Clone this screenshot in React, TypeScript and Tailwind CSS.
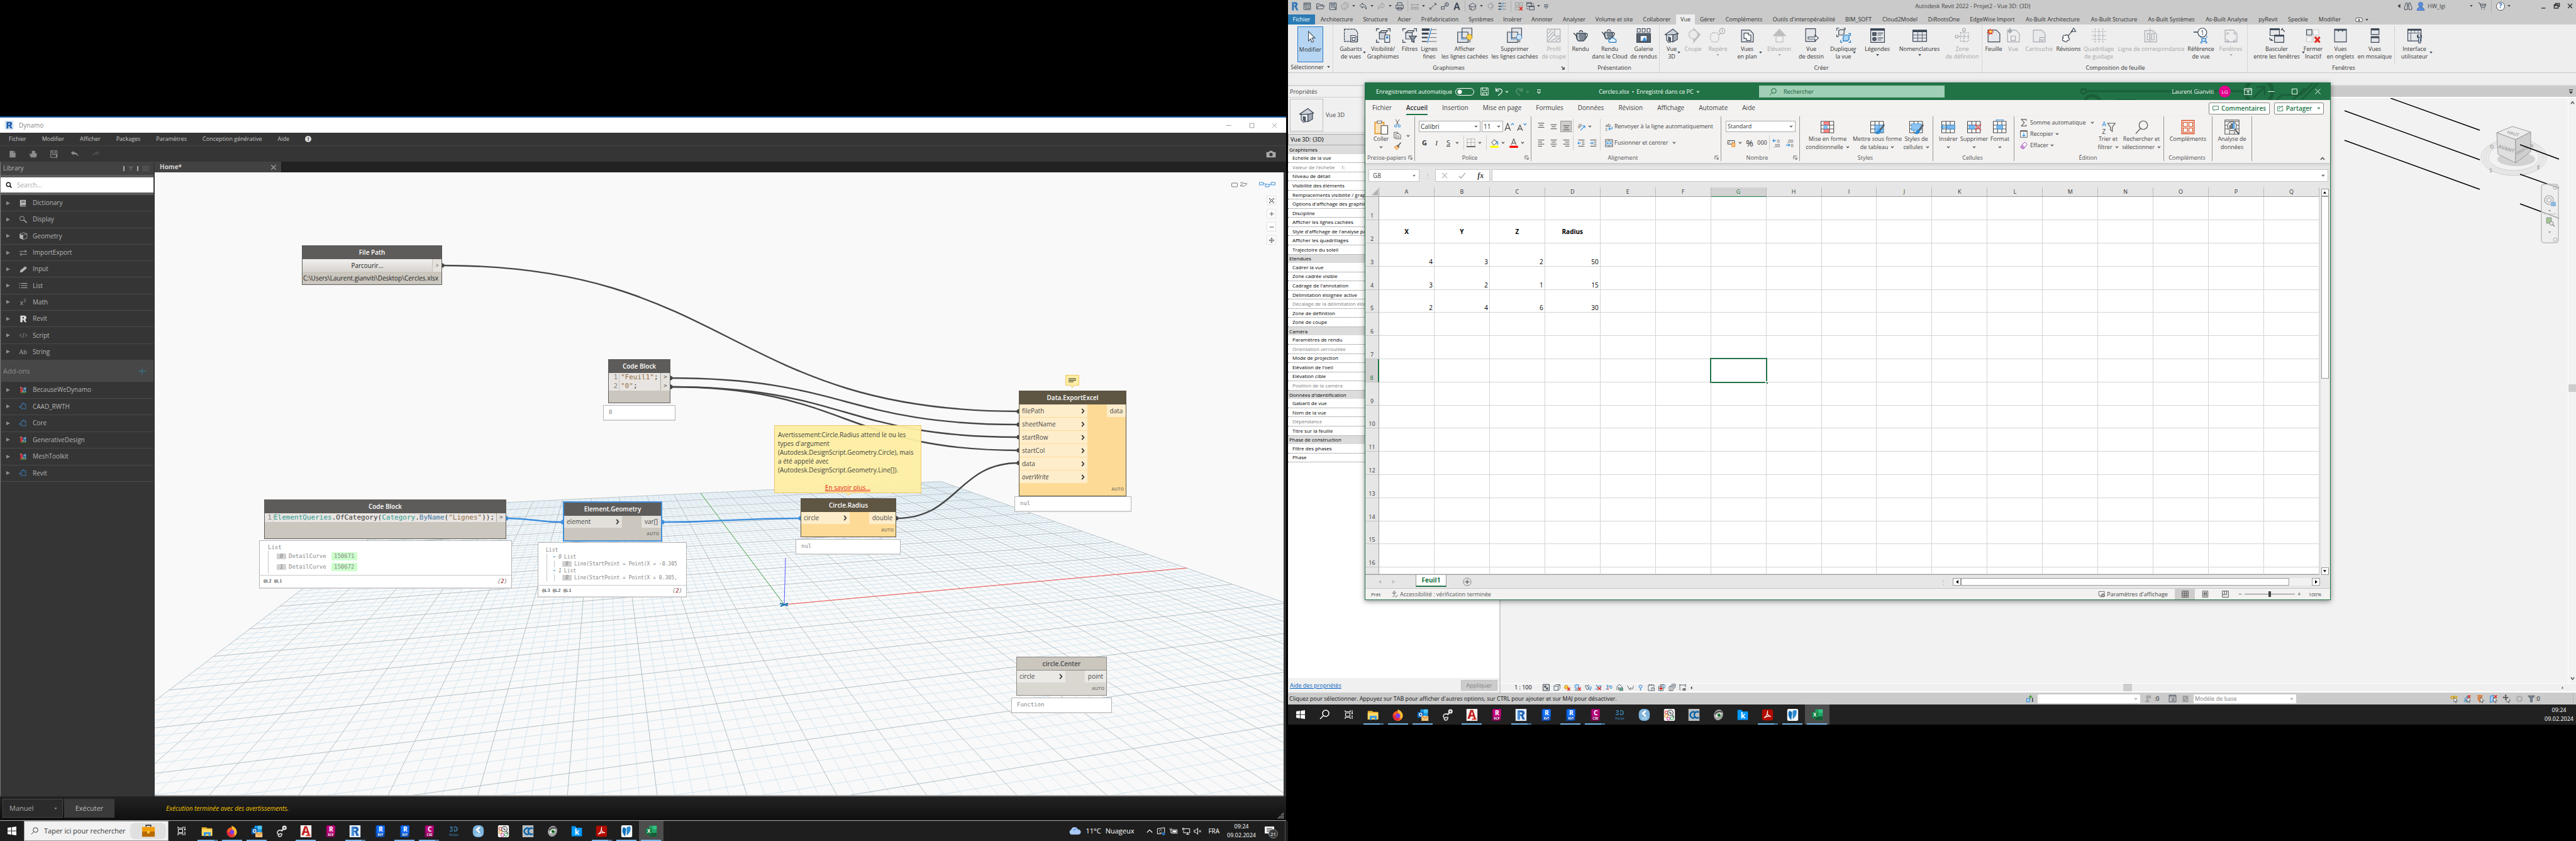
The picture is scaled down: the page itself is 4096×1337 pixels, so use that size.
import React from "react";
import type { ReactNode } from "react";

const INK = "#3b4654";
const BLUE = "#1a74c4";

type SvgProps = { c?: string; vb?: string; children: ReactNode };

function Svg({ c = "h-6 w-6", vb = "0 0 32 32", children }: SvgProps) {
  return (
    <svg aria-hidden="true" viewBox={vb} className={`shrink-0 ${c}`} fill="none">
      {children}
    </svg>
  );
}

function Chevron({ c = "text-[#444]" }: { c?: string }) {
  return (
    <svg aria-hidden="true" viewBox="0 0 8 6" className={`h-[4px] w-[6px] shrink-0 ${c}`} fill="none" stroke="currentColor" strokeWidth="1.6">
      <path d="M1 1l3 3.4L7 1" />
    </svg>
  );
}

function Caret({ c = "text-[#3b4654]" }: { c?: string }) {
  return (
    <svg aria-hidden="true" viewBox="0 0 6 4" className={`h-[3px] w-[5px] shrink-0 ${c}`} fill="currentColor">
      <path d="M0 0h6L3 4z" />
    </svg>
  );
}

/* ------------------------------------------------------------------ */
/* Shared taskbar                                                      */
/* ------------------------------------------------------------------ */

const badge = (fill: string, dark: string, letter: string, tag: string) => (
  <g>
    <path d="M3 2l3-2h15v22l-3 2H3z" fill={dark} />
    <path d="M5 1h16v15H5z" fill={fill} />
    <text x="13" y="13" fontSize="13" fontWeight="700" fill="#fff" textAnchor="middle" fontFamily="Open Sans">{letter}</text>
    <text x="12.5" y="22" fontSize="6" fontWeight="700" fill="#fff" textAnchor="middle" fontFamily="Open Sans">{tag}</text>
  </g>
);

type TaskApp = { name: string; open?: boolean; multi?: boolean; active?: boolean; icon: ReactNode };

const APPS: TaskApp[] = [
  {
    name: "Explorateur", open: true, multi: true,
    icon: (<g><path d="M1 4h9l2 2h10v15H1z" fill="#f0b429" /><path d="M1 8h21v13H1z" fill="#ffd966" /><path d="M5 14h14v8h-4v-4H9v4H5z" fill="#3d9be0" /></g>),
  },
  {
    name: "Firefox", open: true,
    icon: (<g><circle cx="12" cy="14" r="10" fill="#ff5a1f" /><path d="M12 1c7 3 11 8 10 14-1 6-7 9-12 8 6-2 8-6 6-10-1-4-5-6-4-12z" fill="#ffbd2e" /><path d="M2 10c-1 8 4 13 9 13 4 0 7-2 8-5-4 2-9 1-10-4-4 0-5-2-7-4z" fill="#e8253b" /><circle cx="12.5" cy="13.5" r="4.5" fill="#7a3df0" /></g>),
  },
  {
    name: "Outlook", open: true,
    icon: (<g><path d="M7 1h15v14H7z" fill="#1a9be8" /><path d="M14 1h8v7h-8z" fill="#50c8f5" /><path d="M1 6h12v12H1z" fill="#0b5cad" /><text x="7" y="15.5" fontSize="10" fontWeight="700" fill="#fff" textAnchor="middle" fontFamily="Open Sans">O</text><path d="M9 14h14v10H9z" fill="#f7c27a" /><path d="M9 14l7 5 7-5" stroke="#a35c00" /></g>),
  },
  {
    name: "Outil stylet",
    icon: (<g><path d="M12 12l6-7" stroke="#d8d8d8" strokeWidth="3" /><circle cx="18" cy="5" r="4.5" fill="#e9e9e9" /><circle cx="18" cy="5" r="2" fill="#6b6b6b" /><path d="M13 11c-6-3-10 1-9 5 1 3 6 2 7 0M6 18c-2 5 4 6 6 3l1-5" stroke="#e4e4e4" strokeWidth="2" /></g>),
  },
  {
    name: "AutoCAD", open: true,
    icon: (<g><path d="M1 0h22v24H1z" fill="#f6f2f0" /><path d="M3 20L9 2h5l6 18h-4l-1.500-5H9l-1.500 5zM10 12h4l-2-7z" fill="#c4201f" /><path d="M12 19h9v3h-9z" fill="#e2453b" /></g>),
  },
  { name: "ReCap", icon: badge("#c0077b", "#850055", "R", "RCP") },
  {
    name: "Revit 2022", open: true, multi: true,
    icon: (<g><path d="M1 0h22v24H1z" fill="#e3edf8" /><path d="M5 3h9c6 0 7 8 2 10l4 8h-5l-3-7h-2v7H5zM10 7v4c5 1 6-4 2-4z" fill="#1f63b5" /><path d="M5 3l5 4v14H5z" fill="#4a90d9" /></g>),
  },
  { name: "Revit RVT", icon: badge("#146ef5", "#0b4bb0", "R", "RVT") },
  { name: "Revit RVT 2", open: true, icon: badge("#146ef5", "#0b4bb0", "R", "RVT") },
  { name: "Civil 3D", open: true, multi: true, icon: badge("#b5087a", "#7e0052", "C", "C3D") },
  {
    name: "3D PurJet",
    icon: (<g><text x="12" y="12" fontSize="13" fontWeight="700" fill="#3f7fae" textAnchor="middle" fontFamily="Open Sans">3D</text><path d="M12 2v14M7 9l10-4" stroke="#16222d" strokeWidth="1.5" /><text x="12" y="21" fontSize="6" fontWeight="700" fill="#356b95" textAnchor="middle" fontFamily="Open Sans">PurJet</text></g>),
  },
  {
    name: "3DR",
    icon: (<g><rect x="1" y="0" width="22" height="24" rx="9" fill="#7eb4dc" /><path d="M15 4l-6 5 6 6" stroke="#fff" strokeWidth="3.5" /><text x="12" y="21.5" fontSize="6" fontWeight="700" fill="#b8dcf5" textAnchor="middle" fontFamily="Open Sans">3DR</text></g>),
  },
  {
    name: "Recherche BIM",
    icon: (<g><rect x="1" y="0" width="22" height="24" rx="3" fill="#fff" /><g strokeWidth="1.6"><circle cx="6" cy="7" r="3" stroke="#e05252" /><circle cx="6" cy="14" r="3" stroke="#e9a53a" /><circle cx="10" cy="19.5" r="3" stroke="#d65bb0" /><circle cx="17" cy="19" r="3" stroke="#59b877" /></g><circle cx="14" cy="8" r="5.5" fill="#e9eef2" stroke="#555" strokeWidth="1.6" /><path d="M12 6l4 4M18 12l3 5" stroke="#444" strokeWidth="1.8" /></g>),
  },
  {
    name: "CloudCompare",
    icon: (<g><path d="M1 0h22v24H1z" fill="#b9bec2" /><path d="M14 7a6 6 0 1 0 0 10M22 7a6 6 0 1 0 0 10" stroke="#0a64a8" strokeWidth="3" /></g>),
  },
  {
    name: "Visionneuse",
    icon: (<g><ellipse cx="12" cy="12" rx="9" ry="11" fill="#a4a4a4" transform="rotate(20 12 12)" /><path d="M6 15c3-7 8-8 12-6-1 6-7 9-12 6z" fill="#fff" /><circle cx="13" cy="12.5" r="3.5" fill="#3aa04a" /><circle cx="13" cy="12.5" r="1.5" fill="#111" /><path d="M5 10c4-5 9-6 14-4" stroke="#333" strokeWidth="2" /></g>),
  },
  {
    name: "kDrive",
    icon: (<g><path d="M1 2h8l2 3h11v17H1z" fill="#0098ff" /><text x="12" y="19" fontSize="15" fontWeight="700" fill="#fff" textAnchor="middle" fontFamily="Open Sans">k</text></g>),
  },
  {
    name: "Acrobat", open: true, multi: true,
    icon: (<g><rect x="1" y="1" width="22" height="22" rx="4" fill="#b30b00" /><path d="M5 18c4-2 8-8 7-13-2 5 2 10 7 10-5-1-10 0-14 3z" stroke="#fff" strokeWidth="1.6" /></g>),
  },
  {
    name: "Solibri", open: true,
    icon: (<g><rect x="1" y="0" width="22" height="24" rx="3" fill="#f5f8fb" /><path d="M5 4c4 0 5 2 6 4L9 22C3 17 2 9 5 4z" fill="#0f6fb8" /><path d="M12 4c4-2 8-2 8 1 0 7-3 12-8 15z" fill="#2b8bd0" /></g>),
  },
  {
    name: "Excel", open: true, active: true,
    icon: (<g><path d="M8 1h15v22H8z" fill="#21a366" /><path d="M15 1h8v7h-8z" fill="#33c481" /><path d="M15 15h8v8h-8zM8 15h7v8H8z" fill="#185c37" /><path d="M1 6h12v12H1z" fill="#107c41" /><text x="7" y="15.5" fontSize="10" fontWeight="700" fill="#fff" textAnchor="middle" fontFamily="Open Sans">X</text></g>),
  },
];

function TaskApps() {
  return (
    <div className="flex w-[745px] shrink-0">
      {APPS.map((a) => (
        <button key={a.name} type="button" aria-label={a.name} className={`flex h-8 flex-1 flex-col items-center ${a.active ? "bg-[#4d4d4d]" : ""}`}>
          <span className="flex flex-1 items-center pt-[2px]">
            <Svg c="h-[19px] w-[19px]" vb="0 0 24 24">{a.icon}</Svg>
          </span>
          <span className="flex h-[2px] w-8">
            {a.open && <span className="flex-1 bg-[#76b9ed]" />}
            {a.multi && <span className="w-[6px] bg-[#4f7ea3]" />}
          </span>
        </button>
      ))}
    </div>
  );
}

function WindowsLogo() {
  return (
    <Svg c="h-4 w-4" vb="0 0 16 16">
      <path d="M1 3l6-1v5.500H1zM8 2l7-1v6.500H8zM1 8.500h6V14l-6-1zM8 8.500h7V15l-7-1z" fill="#fff" />
    </Svg>
  );
}

function TaskView() {
  return (
    <Svg c="h-4 w-4" vb="0 0 16 16">
      <path d="M2 1v2.500h8V1M2.500 5.500h7v5h-7zM2 15v-2.500h8V15M13 1v6M13 9v6" stroke="#fff" strokeWidth="1.1" />
      <path d="M12 5h2v2h-2z" fill="#fff" />
    </Svg>
  );
}

function Clock() {
  return (
    <div className="flex flex-col items-center text-[9px] leading-[14px] text-white">
      <span>09:24</span>
      <span>09.02.2024</span>
    </div>
  );
}

/* ------------------------------------------------------------------ */
/* Dynamo                                                              */
/* ------------------------------------------------------------------ */

const puzzle = (
  <path d="M7 6h4V3h3v3h5v4l-2 1 2 2v6h-5l-1-2-2 2H7v-4H2v-3h5z" stroke="#3f84c4" strokeWidth="1.5" />
);
const meshIcon = (
  <g>
    <path d="M4 3l7 3v9l-7 6z" fill="#c8343c" />
    <path d="M11 6l9-2v14l-9-3z" fill="#3c6f93" />
    <path d="M4 21l7-6 9 3v2z" fill="#4c7c45" />
    <path d="M13 8l5-1v4z" fill="#5db6e0" />
    <g fill="#fff"><circle cx="5" cy="5" r="1.2" /><circle cx="11" cy="15" r="1.2" /><circle cx="18" cy="16" r="1.2" /><circle cx="17" cy="7" r="1.2" /></g>
  </g>
);

const LIBRARY: { name: string; icon: ReactNode }[] = [
  { name: "Dictionary", icon: (<g><path d="M5 3h14v14H6v2h13v2H5c-2 0-2-2-2-3V5c0-1 1-2 2-2z" fill="#b8b8b8" /><path d="M7 7h9M7 10h9" stroke="#353535" strokeWidth="1.4" /></g>) },
  { name: "Display", icon: (<g stroke="#aaa" strokeWidth="1.6"><circle cx="8.5" cy="9" r="6" /><path d="M13 13l9 8" strokeWidth="2.5" /></g>) },
  { name: "Geometry", icon: (<g><path d="M2 7l9 3v12l-9-4z" fill="#b5b5b5" /><path d="M2 7l10-4 10 3-11 4v12l11-4V6" stroke="#b5b5b5" strokeWidth="1.3" /></g>) },
  { name: "ImportExport", icon: (<path d="M2 8h19l-5-4M21 8l-5 3M22 16H3l5-4M3 16l5 4" stroke="#aaa" strokeWidth="1.5" />) },
  { name: "Input", icon: (<path d="M3 21l1-6L16 5c3-1 6 2 5 5L9 20z" fill="#b5b5b5" />) },
  { name: "List", icon: (<path d="M1 6h2.500M1 12h2.500M1 18h2.500M6 6h17M6 12h17M6 18h17" stroke="#b5b5b5" strokeWidth="2" />) },
  { name: "Math", icon: (<g fill="#aaa"><text x="3" y="20" fontSize="17" fontFamily="Open Sans">x</text><text x="13" y="12" fontSize="11" fontFamily="Open Sans">2</text></g>) },
  { name: "Revit", icon: (<path d="M4 3h11c7 0 7 9 2 11l4 7h-5l-4-7h-2v7H4zM10 7v4c5 1 5-4 2-4z" fill="#dcdcdc" />) },
  { name: "Script", icon: (<path d="M7 8l-5 4 5 4M17 8l5 4-5 4M14 6l-4 13" stroke="#999" strokeWidth="1.4" />) },
  { name: "String", icon: (<text x="0" y="19" fontSize="18" fill="#aaa" fontFamily="Liberation Serif">Ab</text>) },
];
const ADDONS: { name: string; icon: ReactNode }[] = [
  { name: "BecauseWeDynamo", icon: meshIcon },
  { name: "CAAD_RWTH", icon: puzzle },
  { name: "Core", icon: puzzle },
  { name: "GenerativeDesign", icon: meshIcon },
  { name: "MeshToolkit", icon: meshIcon },
  { name: "Revit", icon: puzzle },
];

function LibRows({ rows, h }: { rows: { name: string; icon: ReactNode }[]; h: string }) {
  return (
    <ul className={`flex flex-col ${h}`}>
      {rows.map((r) => (
        <li key={r.name} className="flex flex-1 border-b border-[#4a4a4a]">
          <button type="button" className="flex flex-1 items-center pl-2 text-[10px] text-[#b4b4b4]">
            <svg aria-hidden="true" viewBox="0 0 6 6" className="h-[6px] w-[6px]"><path d="M0 0l6 3-6 3z" fill="#8f8f8f" /></svg>
            <span className="ml-[14px] w-[22px]"><Svg c="h-[14px] w-[14px]" vb="0 0 24 24">{r.icon}</Svg></span>
            {r.name}
          </button>
        </li>
      ))}
    </ul>
  );
}

/* Ground plane: X and Y run from -1 to 1, seen in perspective. */
const project = (X: number, Y: number): [number, number] => {
  const w = 1 + 0.1726 * X + 0.8494 * Y;
  return [(923.4 * X + 604.5 * Y + 1000.8) / w, (50.6 * X + 255.9 * Y + 687.3) / w];
};

function GroundGrid() {
  const minor: string[] = [];
  const major: string[] = [];
  for (let i = -50; i <= 50; i++) {
    const v = i / 50;
    const target = i % 5 === 0 ? major : minor;
    const y0 = Math.max(-1, (-0.88 - 0.1726 * v) / 0.8494);
    const a = project(v, y0);
    const b = project(v, 1);
    target.push(`M${a[0].toFixed(1)} ${a[1].toFixed(1)}L${b[0].toFixed(1)} ${b[1].toFixed(1)}`);
    if (1 + 0.1726 + 0.8494 * v > 0.14) {
      const x0 = Math.max(-1, (-0.88 - 0.8494 * v) / 0.1726);
      const c = project(x0, v);
      const d = project(1, v);
      target.push(`M${c[0].toFixed(1)} ${c[1].toFixed(1)}L${d[0].toFixed(1)} ${d[1].toFixed(1)}`);
    }
  }
  return (
    <g>
      <path d={minor.join("")} stroke="#c9dfec" strokeWidth="0.8" />
      <path d={major.join("")} stroke="#a9bac3" strokeWidth="0.9" />
      <path d="M1001 687L1641 629" stroke="#ff5a5a" />
      <path d="M1001 687L868 510" stroke="#4fae4f" />
      <path d="M1001 687L1003 613" stroke="#5a5aff" />
      <path d="M994 685l13 4M995 690l12-5" stroke="#1f77b4" strokeWidth="2" />
    </g>
  );
}

const wire = (x0: number, y0: number, x1: number, y1: number) => {
  const m = (x0 + x1) / 2;
  return `M${x0} ${y0}C${m} ${y0} ${m} ${y1} ${x1} ${y1}`;
};
const DARK_WIRES: [number, number, number, number][] = [
  [457, 148, 1374, 380],
  [820, 327, 1374, 401],
  [820, 341, 1374, 421],
  [820, 341, 1374, 442],
  [1179, 550, 1374, 462],
];
const BLUE_WIRES: [number, number, number, number][] = [
  [559, 550, 649, 556],
  [807, 556, 1027, 550],
];

function Wires() {
  return (
    <g strokeWidth="2.4">
      {DARK_WIRES.map((w) => (
        <g key={w.join()}>
          <path d={wire(...w)} stroke="#464646" />
          <circle cx={w[0]} cy={w[1]} r="3.5" fill="#464646" />
          <circle cx={w[2]} cy={w[3]} r="3.5" fill="#464646" />
        </g>
      ))}
      {BLUE_WIRES.map((w) => (
        <g key={w.join()}>
          <path d={wire(...w)} stroke="#3f8fdc" />
          <circle cx={w[0]} cy={w[1]} r="3.5" fill="#3f8fdc" />
          <circle cx={w[2]} cy={w[3]} r="3.5" fill="#3f8fdc" />
        </g>
      ))}
    </g>
  );
}

function PortChevron() {
  return (
    <svg aria-hidden="true" viewBox="0 0 6 10" className="h-[9px] w-[6px]" fill="none" stroke="#3c3c3c" strokeWidth="2">
      <path d="M1 1l3.500 4L1 9" />
    </svg>
  );
}

type NodeProps = {
  place: string;
  title: string;
  inputs: string[];
  output: string;
  inW: string;
  outW: string;
  rowH?: string;
  tone?: "plain" | "warn" | "selected" | "off";
};

function GraphNode({ place, title, inputs, output, inW, outW, rowH = "h-[19px]", tone = "plain" }: NodeProps) {
  const frame = {
    plain: "border border-[#5e5c5a] bg-[#cbc6be]",
    warn: "border border-[#5e5543] bg-[#fddb96]",
    selected: "border-2 border-[#3f8fdc] bg-[#cbc6be]",
    off: "border border-[#8c8a86] bg-[#dad7d1]",
  }[tone];
  const head = {
    plain: "bg-[#5e5c5a] text-white",
    warn: "bg-[#5e5543] text-white",
    selected: "bg-[#5e5c5a] text-white",
    off: "border-b border-[#8c8a86] bg-[#cbc6be] text-[#4b4b4b]",
  }[tone];
  const port = { plain: "bg-[#e3e0db]", warn: "bg-[#feedcb]", selected: "bg-[#e3e0db]", off: "bg-[#ebe9e6]" }[tone];
  return (
    <article className={`absolute flex flex-col ${frame} ${place}`}>
      <h3 className={`flex h-[21px] items-center justify-center text-[10px] font-semibold ${head}`}>{title}</h3>
      <div className="flex items-start justify-between text-[10px] text-[#4a4a4a]">
        <ul className={`flex flex-col gap-px ${inW}`}>
          {inputs.map((n) => (
            <li key={n} className={`flex items-center justify-between pl-1 pr-1 ${rowH} ${port} ${n === "overWrite" ? "italic" : ""}`}>
              {n}
              <PortChevron />
            </li>
          ))}
        </ul>
        <span className={`flex items-center justify-center ${rowH} ${outW} ${port}`}>{output}</span>
      </div>
      <span className="flex h-5 items-center justify-end pr-[3px] text-[7px] font-bold text-[#4a4a4a]/60">AUTO</span>
    </article>
  );
}

function Preview({ place, size = "text-[9px]", children }: { place: string; size?: string; children: ReactNode }) {
  return (
    <div className={`absolute border border-b-2 border-[#b4b4b4] border-b-[#cfcfcf] bg-white font-['DejaVu_Sans_Mono',monospace] text-[#888] ${size} ${place}`}>
      {children}
    </div>
  );
}

function CodePort() {
  return <span className="flex h-full w-[15px] shrink-0 items-center justify-center border-l border-[#aaa7a2] bg-[#e5e1dd] text-[9px] text-[#555]">&gt;</span>;
}

function FilePathNode() {
  return (
    <article className="absolute left-[234px] top-[116px] flex w-[223px] flex-col border border-[#5e5c5a] bg-[#cbc6be]">
      <h3 className="flex h-[21px] items-center justify-center bg-[#5e5c5a] text-[10px] font-semibold text-white">File Path</h3>
      <div className="flex h-5">
        <button type="button" className="flex-1 bg-linear-to-b from-[#f1f0ee] to-[#d8d4cf] text-[10px] text-[#222]">Parcourir...</button>
        <span className="flex w-[15px] items-center justify-center border-l border-[#c4bfb8] bg-[#e5e1dd] text-[9px] text-[#555]">&gt;</span>
      </div>
      <p className="flex h-[20px] items-center pl-px text-[10px] whitespace-nowrap text-[#222]">C:\Users\Laurent.gianviti\Desktop\Cercles.xlsx</p>
    </article>
  );
}

function FeuilNode() {
  return (
    <article className="absolute left-[721px] top-[297px] flex w-[99px] flex-col border border-[#5e5c5a] bg-[#cbc6be] pb-[19px]">
      <h3 className="flex h-[21px] items-center justify-center bg-[#5e5c5a] text-[10px] font-semibold text-white">Code Block</h3>
      {['"Feuil1"', '"0"'].map((s, i) => (
        <div key={s} className="flex h-[14px] items-center bg-[#e8e4e1] font-['DejaVu_Sans_Mono',monospace] text-[11px] text-[#333]">
          <span className="w-[17px] border-r border-dotted border-[#aaa] pr-[2px] text-right text-[#888]">{i + 1}</span>
          <span className="flex-1 pl-[2px]"><span className="text-[#94704a]">{s}</span>;</span>
          <CodePort />
        </div>
      ))}
    </article>
  );
}

function QueryNode() {
  return (
    <article className="absolute left-[174px] top-[520px] flex w-[385px] flex-col border border-[#5e5c5a] bg-[#cbc6be] pb-[26px]">
      <h3 className="flex h-[21px] items-center justify-center bg-[#5e5c5a] text-[10px] font-semibold text-white">Code Block</h3>
      <div className="flex h-[14px] items-center bg-[#e8e4e1] font-['DejaVu_Sans_Mono',monospace] text-[11px] whitespace-nowrap text-[#333]">
        <span className="w-[14px] shrink-0 border-r border-dotted border-[#aaa] pr-[2px] text-right text-[#888]">1</span>
        <code className="flex-1 font-['DejaVu_Sans_Mono',monospace]">
          <span className="text-[#2f9c91]">ElementQueries</span>.OfCategory(<span className="text-[#2f9c91]">Category</span>.<span className="text-[#4676a0]">ByName</span>(<span className="text-[#94704a]">"Lignes"</span>));
        </code>
        <CodePort />
      </div>
    </article>
  );
}

function IndexTag({ n }: { n: string }) {
  return <span className="flex h-[9px] w-[15px] items-center justify-center bg-[#d2d2d2] italic">{n}</span>;
}

function DynamoCanvas() {
  return (
    <div className="relative min-w-0 flex-1 overflow-hidden bg-[#f9f9f9]">
      <svg aria-hidden="true" className="absolute inset-0 h-full w-full" fill="none">
        <GroundGrid />
        <Wires />
      </svg>

      <FilePathNode />
      <FeuilNode />
      <Preview place="left-[713px] top-[370px] flex h-[25px] w-[115px] items-center pl-2">0</Preview>
      <QueryNode />
      <Preview place="left-[166px] top-[585px] flex h-[77px] w-[402px] flex-col">
        <div className="flex flex-1 flex-col pl-[13px] pt-[5px]">
          <span className="leading-[11px]">List</span>
          <ul className="flex w-[160px] flex-col gap-[4px] border-l border-[#c4c4c4] pt-[2px] pl-[13px] pb-1">
            {["150671", "150672"].map((id, i) => (
              <li key={id} className="flex h-[13px] items-center gap-1">
                <IndexTag n={String(i)} />
                <span className="w-[64px]">DetailCurve</span>
                <span className="flex h-[13px] items-center bg-[#ccffcc] px-1">{id}</span>
              </li>
            ))}
          </ul>
        </div>
        <div className="flex h-[20px] items-center justify-between border-t border-[#c9c9c9] px-[6px]">
          <span className="text-[7px] text-[#222]">@L2 @L1</span>
          <span className="text-[9px] italic">{"{"}<span className="text-[#9c1c1c]">2</span>{"}"}</span>
        </div>
      </Preview>

      <GraphNode place="left-[649px] top-[523px] w-[158px]" title="Element.Geometry" inputs={["element"]} output="var[]" inW="w-[92px]" outW="w-[31px]" tone="selected" />
      <Preview place="left-[609px] top-[588px] flex h-[88px] w-[237px] flex-col" size="text-[8px]">
        <div className="flex flex-1 flex-col overflow-hidden pt-[6px] pl-[12px]">
          <span className="leading-[11px]">List</span>
          <div className="ml-px border-l border-[#c4c4c4] pl-[9px]">
            {["Line(StartPoint = Point(X = -0.305", "Line(StartPoint = Point(X = 0.305,"].map((t, i) => (
              <div key={t}>
                <div className="flex h-[11px] items-center gap-1"><Caret c="text-[#8fbfe0]" /><span className="italic">{i}</span><span>List</span></div>
                <div className="ml-[2px] flex h-[11px] items-center gap-1 border-l border-[#c4c4c4] pl-[12px] whitespace-nowrap"><IndexTag n="0" />{t}</div>
              </div>
            ))}
          </div>
        </div>
        <div className="flex h-[18px] items-center justify-between border-t border-[#c9c9c9] px-[6px]">
          <span className="text-[7px] text-[#222]">@L3 @L2 @L1</span>
          <span className="text-[9px] italic">{"{"}<span className="text-[#9c1c1c]">2</span>{"}"}</span>
        </div>
      </Preview>

      <aside className="absolute left-[985px] top-[402px] flex h-[108px] w-[234px] flex-col border border-[#f0c46c] bg-[#fdeea2]/95 px-[5px] pt-[7px] text-[10px] leading-[14px] text-[#3f3f3f]">
        <p>Avertissement:Circle.Radius attend le ou les<br />types d'argument<br /><span className="whitespace-nowrap">(Autodesk.DesignScript.Geometry.Circle), mais</span><br />a été appelé avec<br />(Autodesk.DesignScript.Geometry.Line[]).</p>
        <a href="#aide" className="mt-[14px] text-center text-[#e81c1c] underline">En savoir plus...</a>
        <svg aria-hidden="true" viewBox="0 0 8 5" className="absolute left-[113px] top-[106px] h-[5px] w-[8px]"><path d="M0 0l4 4.500L8 0z" fill="#fdeea2" stroke="#f0c46c" /></svg>
      </aside>
      <GraphNode place="left-[1027px] top-[518px] w-[152px]" title="Circle.Radius" inputs={["circle"]} output="double" inW="w-[77px]" outW="w-[42px]" tone="warn" />
      <Preview place="left-[1019px] top-[583px] flex h-[25px] w-[167px] items-center pl-2">nul</Preview>

      <svg aria-label="Note" role="img" viewBox="0 0 22 22" className="absolute left-[1448px] top-[322px] h-[22px] w-[22px]">
        <path d="M.5.500h21v16H14l-3 4-3-4H.5z" fill="#fdeea2" stroke="#f0c46c" />
        <path d="M5 6h12M5 8.500h12M5 11h8" stroke="#222" />
      </svg>
      <GraphNode place="left-[1374px] top-[347px] w-[171px]" title="Data.ExportExcel" inputs={["filePath", "sheetName", "startRow", "startCol", "data", "overWrite"]} output="data" inW="w-[108px]" outW="w-[30px]" rowH="h-5" tone="warn" />
      <Preview place="left-[1367px] top-[515px] flex h-[25px] w-[186px] items-center pl-2">nul</Preview>

      <GraphNode place="left-[1370px] top-[770px] w-[144px]" title="circle.Center" inputs={["circle"]} output="point" inW="w-[77px]" outW="w-[34px]" tone="off" />
      <Preview place="left-[1362px] top-[835px] flex h-[25px] w-[160px] items-center pl-2">Function</Preview>

      <div className="absolute right-3 top-2 flex flex-col items-end gap-[6px]">
        <div className="mt-[6px] mb-[7px] flex gap-4">
          <button type="button" aria-label="Arrière-plan 3D"><Svg c="h-[10px] w-[28px]" vb="0 0 56 20"><rect x="3" y="6" width="18" height="12" rx="2" stroke="#777" strokeWidth="2" /><path d="M30 15l10-9 12 2-9 8zM30 6l8-3" stroke="#777" strokeWidth="2" /></Svg></button>
          <button type="button" aria-label="Vue du graphe"><Svg c="h-[10px] w-[28px]" vb="0 0 56 20"><path d="M3 4h12v8H3zM22 10h12v8H22zM40 4h13v8H40zM15 8h8M34 14l6-6" stroke="#3f8fdc" strokeWidth="2" /></Svg></button>
        </div>
        {[
          { l: "Ajuster", d: "M3 7V3h4M13 3h4v4M17 13v4h-4M7 17H3v-4M7 7h6v6H7z" },
          { l: "Zoom avant", d: "M10 3v14M3 10h14" },
          { l: "Zoom arrière", d: "M3 10h14" },
          { l: "Panoramique", d: "M10 2v16M2 10h16M7 5l3-3 3 3M7 15l3 3 3-3M5 7l-3 3 3 3M15 7l3 3-3 3" },
        ].map((b) => (
          <button key={b.l} type="button" aria-label={b.l} className="flex h-[15px] w-[15px] items-center justify-center border border-[#e2e2e2] bg-white">
            <Svg c="h-[10px] w-[10px]" vb="0 0 20 20"><path d={b.d} stroke="#555" strokeWidth="2" /></Svg>
          </button>
        ))}
      </div>
    </div>
  );
}

function DynamoWindow() {
  return (
    <section aria-label="Dynamo" className="mr-[3px] flex min-h-0 flex-1 flex-col border-t-2 border-[#1d5fa3] bg-[#353535]">
      <header className="flex h-6 items-center bg-white pl-[7px] text-[#888]">
        <Svg c="h-[14px] w-[15px]" vb="0 0 24 24"><path d="M0 0h24v24H0z" fill="#d4e2f1" /><path d="M5 3h10c6 0 7 8 2 10l4 8h-5l-4-7h-2v7H5zM10 7v4c5 1 6-4 2-4z" fill="#1f5faf" /></Svg>
        <h1 className="ml-2 flex-1 text-[10px]">Dynamo</h1>
        <div className="flex w-[97px] justify-between pr-[13px] text-[#777]">
          {["M2 8h12", "M3 3h10v10H3z", "M3 3l10 10M13 3L3 13"].map((d) => (
            <button key={d} type="button" aria-label="Fenêtre"><Svg c="h-[11px] w-[11px]" vb="0 0 16 16"><path d={d} stroke="currentColor" /></Svg></button>
          ))}
        </div>
      </header>
      <nav className="flex h-[21px] items-center gap-[25px] border-b border-[#434343] pl-[14px] text-[9px] text-[#c8c8c8]">
        {["Fichier", "Modifier", "Afficher", "Packages", "Paramètres", "Conception générative", "Aide"].map((m) => (
          <button key={m} type="button">{m}</button>
        ))}
        <span className="flex h-[10px] w-[10px] items-center justify-center rounded-full bg-[#ddd] text-[8px] font-bold text-[#333]">!</span>
      </nav>
      <div className="flex h-[25px] items-center pl-[13px]">
        {[
          <path key="n" d="M4 3h10v5h6v13H4zM15 3l5 4h-5z" fill="#8c8c8c" />,
          <path key="o" d="M8 3h9v7h5l-2 11H5L1 11h7z" fill="#8c8c8c" />,
          <path key="s" d="M3 3h17v18H3zM7 3v6h9V3M6 13h12v8" stroke="#8c8c8c" strokeWidth="2" />,
          <path key="u" d="M1 9l8-6v4c7 0 12 5 13 12-3-5-7-7-13-7v3z" fill="#8c8c8c" />,
          <path key="r" d="M23 9l-8-6v4C8 7 3 12 2 19c3-5 7-7 13-7v3z" fill="#4c4c4c" />,
        ].map((i, n) => (
          <button key={n} type="button" aria-label="Outil" className="w-[33px]"><Svg c="h-[14px] w-[14px]" vb="0 0 24 24">{i}</Svg></button>
        ))}
        <span className="ml-auto mr-[16px]"><Svg c="h-3 w-4" vb="0 0 24 18"><path d="M1 4h6l2-3h6l2 3h6v13H1z" fill="#aaa" /><circle cx="12" cy="10" r="4" fill="#353535" /></Svg></span>
      </div>
      <div className="flex min-h-0 flex-1">
        <aside className="flex w-[244px] flex-col border-l border-[#777]">
          <div className="flex h-[21px] items-center bg-[#424242] pl-1 text-[10px] text-[#b4b4b4]">
            <h2 className="flex-1">Library</h2>
            <div className="flex w-[48px] items-center justify-between pr-[7px]">
              <span className="h-2 w-[2px] bg-[#aaa]" />
              <Svg c="h-2 w-2" vb="0 0 16 16"><path d="M0 1h16l-6 7v7H6V8z" fill="#636363" /></Svg>
              <span className="h-2 w-[2px] bg-[#aaa]" />
              <Svg c="h-2 w-[11px]" vb="0 0 16 12"><path d="M0 1h16M0 4.500h16M0 8h16M0 11.500h16" stroke="#636363" strokeWidth="1.5" /></Svg>
            </div>
          </div>
          <label className="flex h-8 items-center border-y-4 border-[#5c5c5c] bg-white pl-[8px]">
            <Svg c="h-[10px] w-[10px]" vb="0 0 16 16"><circle cx="7" cy="7" r="5" stroke="#111" strokeWidth="2.2" /><path d="M11 11l4 4" stroke="#111" strokeWidth="2.6" /></Svg>
            <input aria-label="Search" placeholder="Search..." className="ml-2 flex-1 text-[10px] outline-none placeholder:text-[#aaa]" />
          </label>
          <LibRows rows={LIBRARY} h="h-[263px] border-l border-[#464646]" />
          <div className="flex h-[34px] items-center justify-between bg-[#474747] pr-3 pl-1 text-[11px] text-[#8c8c8c]">
            <h2>Add-ons</h2>
            <button type="button" aria-label="Ajouter"><Svg c="h-3 w-3" vb="0 0 12 12"><path d="M6 0v12M0 6h12" stroke="#3d7186" strokeWidth="1.3" /></Svg></button>
          </div>
          <LibRows rows={ADDONS} h="h-[159px] border-l border-[#464646]" />
        </aside>
        <div className="ml-[2px] flex min-w-0 flex-1 flex-col">
          <div className="flex h-[17px] bg-[#222]">
            <button type="button" className="flex w-[201px] items-center justify-between bg-[#424242] px-2 text-[10px] font-bold text-[#d0d0d0]">
              Home*
              <Svg c="h-2 w-2" vb="0 0 8 8"><path d="M0 0l8 8M8 0L0 8" stroke="#999" strokeWidth="1.4" /></Svg>
            </button>
          </div>
          <div className="mr-[4px] flex min-h-0 flex-1 border-b-2 border-[#9a9a9a]"><DynamoCanvas /></div>
        </div>
      </div>
      <footer className="flex h-[39px] items-center border-b border-[#a8a8a8] bg-linear-to-b from-[#232323] to-[#101010] pl-1 text-[11px] text-[#aaa]">
        <div className="flex h-[30px] w-[96px] items-center border border-[#444] bg-[#2b2b2b] pr-2">
          <select aria-label="Mode d'exécution" className="flex-1 appearance-none pl-[10px]"><option>Manuel</option></select>
          <Caret c="text-[#888]" />
        </div>
        <button type="button" className="ml-[2px] h-[30px] w-[80px] bg-[#3a3a3a] text-[#bbb]">Exécuter</button>
        <p className="ml-[82px] text-[10px] text-[#f5c400] italic">Exécution terminée avec des avertissements.</p>
        <Svg c="ml-auto mr-1 mt-6 h-[10px] w-[10px]" vb="0 0 12 12"><path d="M10 1h2M10 4h2M7 4h2M10 7h2M7 7h2M4 7h2M10 10h2M7 10h2M4 10h2M1 10h2" stroke="#ccc" strokeWidth="1.6" /></Svg>
      </footer>
    </section>
  );
}

function LeftTaskbar() {
  return (
    <footer className="flex h-8 items-center bg-[#1e1e1e] text-white">
      <button type="button" aria-label="Démarrer" className="flex w-[38px] justify-center"><WindowsLogo /></button>
      <label className="flex h-8 w-[230px] items-center border border-[#999] bg-[#f1f1f1] pl-[10px]">
        <Svg c="h-3 w-3" vb="0 0 16 16"><circle cx="10" cy="6" r="5" stroke="#333" strokeWidth="1.3" /><path d="M6 10l-5 5" stroke="#333" strokeWidth="1.3" /></Svg>
        <input aria-label="Rechercher" placeholder="Taper ici pour rechercher" className="ml-[9px] w-[137px] text-[11px] outline-none placeholder:text-[#333]" />
        <span className="flex h-[26px] w-[57px] items-center justify-center rounded-lg bg-[#e0e0e0]">
          <Svg c="h-[22px] w-6" vb="0 0 24 24"><path d="M8 5V2h8v3" stroke="#3a3a3a" strokeWidth="2" /><path d="M1 5h22v17H1z" fill="#f29d0b" /><path d="M1 13h22v9H1z" fill="#b86a00" /><path d="M10 12h4v4h-4z" fill="#ffd95a" /></Svg>
        </span>
      </label>
      <button type="button" aria-label="Affichage des tâches" className="flex w-[42px] justify-center"><TaskView /></button>
      <TaskApps />
      <div className="ml-auto flex items-center text-[11px]">
        <Svg c="h-[14px] w-5" vb="0 0 24 16"><path d="M6 15a5 5 0 0 1-1-9.500A7 7 0 0 1 18 5a5 5 0 0 1 1 10z" fill="#a9c8f5" /><path d="M9 6a7 7 0 0 1 9-1c-5-1-7 2-7 3z" fill="#5e90e0" /></Svg>
        <span className="ml-[7px]">11°C</span>
        <span className="ml-[7px] mr-5">Nuageux</span>
        <div className="flex w-[88px] items-center justify-between">
          <Svg c="h-[10px] w-[10px]" vb="0 0 12 12"><path d="M1 9l5-5 5 5" stroke="#fff" strokeWidth="1.3" /></Svg>
          <Svg c="h-[13px] w-[14px]" vb="0 0 16 16"><path d="M1 3l14-2v11M1 3v10h8" stroke="#fff" strokeWidth="1.2" /><path d="M5 8a3 3 0 0 1 5-2M10 9a3 3 0 0 1-5 1" stroke="#fff" /><circle cx="13" cy="13" r="3" fill="#2a78c9" /></Svg>
          <Svg c="h-[13px] w-[14px]" vb="0 0 16 16"><path d="M5 5h10v7H5z" stroke="#fff" /><path d="M6.500 6.500h7v4h-7z" fill="#fff" /><path d="M1 2v3h3V2M2.500 5v6H5" stroke="#fff" /></Svg>
          <Svg c="h-[13px] w-[14px]" vb="0 0 16 16"><path d="M5 3h10v8H3V7M8 14h6M11 11v3M1 2h3v3H1z" stroke="#fff" strokeWidth="1.2" /></Svg>
          <Svg c="h-[13px] w-[13px]" vb="0 0 16 16"><path d="M1 6h3l4-4v12l-4-4H1zM10.500 6l4 4M14.500 6l-4 4" stroke="#fff" strokeWidth="1.2" /></Svg>
        </div>
        <span className="mr-3 ml-[10px] text-[10px]">FRA</span>
        <Clock />
        <span className="relative mr-[16px] ml-[14px]">
          <Svg c="h-4 w-4" vb="0 0 16 16"><path d="M0 1h15v11H9l-3 3v-3H0z" fill="#fff" /><path d="M3 4h9M3 6.500h9M3 9h5" stroke="#1e1e1e" /></Svg>
          <span className="absolute top-[5px] left-[6px] flex h-[15px] w-[15px] items-center justify-center rounded-full border border-[#888] bg-[#3a3a3a] text-[8px]">21</span>
        </span>
        <span className="mr-1 h-8 w-px bg-[#555]" />
      </div>
    </footer>
  );
}

/* ------------------------------------------------------------------ */
/* Revit                                                               */
/* ------------------------------------------------------------------ */

const page = "M4 5h17l7 7v17H4z";
const RI: Record<string, ReactNode> = {
  cursor: (<path d="M11 3v22l5-5 3 8 4-2-4-8h7z" fill="#fff" stroke={INK} strokeWidth="1.5" />),
  template: (<g stroke={INK} strokeWidth="1.5"><path d="M2 3h22l5 6v19H2z" fill="#e2e4e8" strokeDasharray="5 1" /><path d="M15 16h9l4 4v9H15zM18 20h6v6h-6z" fill="#f5f6f8" /></g>),
  visibility: (<g stroke={INK} strokeWidth="1.5"><path d="M2 7V2h6M24 2h6v6M2 24v6h6M8 10l5-4h12l-4 4zM8 10h13v13H8z" fill="#cfd4db" /><path d="M19 15h10v15H19z" fill="#e8eef5" /><path d="M22 18h4v4h-4z" fill="#1a74c4" stroke="none" /></g>),
  filter: (<g stroke={INK} strokeWidth="1.5"><path d="M2 7V2h6M24 2h6v6M2 24v6h6M8 10l5-4h12l-4 4zM8 10h13v13H8z" fill="#dfe2e6" /><path d="M15 17h15l-5 6v7l-5-2v-5z" fill="#8b95a3" /></g>),
  thin: (<g stroke={INK}><path d="M1 4h16" strokeWidth="5" /><path d="M1 12h14" strokeWidth="4" /><path d="M1 20h12" strokeWidth="3" /><path d="M1 28h10" strokeWidth="2" /><path d="M20 4h11M18 12h13M16 20h15M14 28h17" /><path d="M21 1l-9 30" stroke="#2f8fe0" strokeWidth="1.5" /></g>),
  showHidden: (<g><path d="M10 1h20v20H10zM1 9h21v21H1z" fill="#e2e4e8" stroke={INK} strokeWidth="1.5" /><path d="M9 9v15h12" stroke={BLUE} strokeWidth="1.5" strokeDasharray="2 1" /><circle cx="25" cy="19" r="5.5" fill="#ffd24a" stroke="#b37a00" /><path d="M22.500 25h5v5h-5z" fill="#999" /></g>),
  removeHidden: (<g><path d="M10 1h20v20H10zM1 9h21v21H1z" fill="#e2e4e8" stroke={INK} strokeWidth="1.5" /><path d="M9 9v15h12" stroke={BLUE} strokeWidth="1.5" strokeDasharray="2 1" /><circle cx="25" cy="19" r="5.5" fill="#cfe5fa" stroke={BLUE} /><path d="M22.500 25h5v5h-5z" fill="#999" /></g>),
  profile: (<path d="M3 3h26v26H3zM18 3v14h11M5 27L17 13M5 20l10-12M11 27l14-8M5 12l6-7M20 27l8-6" stroke={INK} strokeWidth="1.5" />),
  teapot: (<g><path d="M8 11h17c2 7 0 13-3 16H11c-4-4-5-10-3-16z" fill="#7d8794" stroke={INK} strokeWidth="1.5" /><path d="M11 13c-1 5 0 9 2 12" stroke="#dfe3e8" strokeWidth="2" /><path d="M9 18C5 16 4 12 1 11M24 13c6-4 8 2 1 10M13 9c1-4 6-4 7 0" stroke={INK} strokeWidth="1.8" /></g>),
  teapotCloud: (<g><path d="M6 9h15c2 7 0 11-3 14H9C5 19 4 15 6 9z" fill="#7d8794" stroke={INK} strokeWidth="1.5" /><path d="M9 11c-1 4 0 7 2 10" stroke="#dfe3e8" strokeWidth="2" /><path d="M7 16C3 14 3 10 0 9M20 11c6-4 8 2 1 9M11 7c1-4 6-4 7 0" stroke={INK} strokeWidth="1.8" /><path d="M17 30a3 3 0 0 1 0-6 5 5 0 0 1 9-1 4 4 0 0 1 2 7z" fill="#e6f1fc" stroke={BLUE} strokeWidth="1.5" /></g>),
  gallery: (<g stroke={INK} strokeWidth="1.5"><path d="M3 2h6v7H3zM13 2h6v7h-6zM23 2h6v7h-6z" fill="#fff" /><path d="M2 12h28v18H2z" fill="#59626f" /><path d="M9 16h14v12H9z" fill="#e7eef5" /><path d="M13 27l5-8 4 8z" fill="#2f8fe0" stroke="none" /></g>),
  house: (<g stroke={INK} strokeWidth="1.5"><path d="M2 14l16-11 11 9-10 6z" fill="#cdd2d9" /><path d="M5 15l13-1v14l-9 2-4-5z" fill="#eceef1" /><path d="M18 15l9-3v12l-9 5z" fill="#a5adb8" /><path d="M9 19l4 1v8l-4-2z" fill="#59626f" /></g>),
  section: (<g><path d="M16 0l15 14H16zM16 14h15L16 32z" fill="#777" /><circle cx="16" cy="14" r="9" fill="#e5e5e5" stroke="#777" strokeWidth="1.5" /></g>),
  callout: (<g stroke={INK} strokeWidth="1.5"><rect x="1" y="10" width="17" height="19" rx="7" strokeDasharray="3 2" /><circle cx="25" cy="7" r="5.5" /><path d="M22 11l-5 4M25 4v6" /></g>),
  plan: (<g stroke={INK} strokeWidth="1.5"><path d={page} fill="#e4e6ea" /><path d="M9 11h9v4h5v11h-9v-4H9z" fill="#fff" /></g>),
  elevation: (<g><path d="M16 2l14 15H2z" fill="#777" /><path d="M9 17h14v12H9z" fill="#f3f3f3" stroke="#777" strokeWidth="1.5" /></g>),
  drafting: (<g stroke={INK} strokeWidth="1.5"><path d="M4 2h20v26H4z" fill="#e4e6ea" /><path d="M9 19h14v-4l7 6-7 6v-4H9z" fill="#fff" /></g>),
  duplicate: (<g strokeWidth="1.5"><path d="M2 6V1h5M16 1h3v4M2 14v4h4" stroke={INK} /><path d="M6 6l3-2h8v8l-3 3H6z" fill="#e4e6ea" stroke={INK} /><path d="M13 30h-3v-5M26 12h4v5M30 26v4h-4" stroke={BLUE} /><path d="M15 18l3-3h9v8l-3 4h-9z" fill="#a9d3f5" stroke={BLUE} /></g>),
  legend: (<g stroke={INK} strokeWidth="1.5"><path d="M2 2h28v28H2z" fill="#e4e6ea" /><path d="M2 4h28" strokeWidth="4" /><path d="M6 10h7v6H6z" fill="#59626f" /><circle cx="9.5" cy="23" r="3.5" fill="#59626f" /><path d="M16 11h11M16 15h8M16 21h11M16 25h8" /></g>),
  schedule: (<g stroke={INK} strokeWidth="1.5"><path d="M2 5h28v23H2z" fill="#e4e6ea" /><path d="M2 7h28" strokeWidth="4" /><path d="M2 15h28M2 21h28M12 9v19M21 9v19" strokeWidth="1" /></g>),
  scope: (<g stroke={INK} strokeWidth="1.5"><path d="M12 10h16v18H12z" strokeDasharray="3 2" /><circle cx="19" cy="4" r="3" /><circle cx="4" cy="18" r="3" /><path d="M19 7v22M7 18h22" strokeDasharray="4 2" /></g>),
  sheet: (<g><path d={page} fill="#e4e6ea" stroke={INK} strokeWidth="1.5" /><path d="M8 1l2 4 4-2-2 4 4 2-4 1 1 4-4-2-3 3v-4l-5-1 4-2-2-4 4 1z" fill="#e2231a" /><circle cx="9" cy="8" r="3" fill="#ffe14a" /></g>),
  sheetView: (<g stroke={INK} strokeWidth="1.5"><path d={page} /><path d="M9 1v8M5 6l4 4 4-4" strokeWidth="3" /><path d="M11 17h9v9h-9z" /></g>),
  title: (<g stroke={INK} strokeWidth="1.5"><path d={page} fill="#e4e6ea" /><path d="M17 20h11M17 25h11M17 20v9M22 25v4" /></g>),
  revision: (<g stroke={INK} strokeWidth="1.5"><path d="M7 27c-5 0-5-5-2-6-3-3 0-7 4-5 3-3 8 0 6 4 4 2 2 7-2 6-1 4-5 4-6 1z" fill="#fff" /><path d="M14 17L24 6M21 8l5-7 4 7z" /></g>),
  guide: (<path d="M2 8h28M2 16h28M2 24h28M8 2v28M16 2v28M24 2v28" stroke={INK} strokeWidth="1.5" strokeDasharray="3 2" />),
  match: (<g stroke={INK} strokeWidth="1.5"><path d="M3 6h16l8 7v16H3z" /><path d="M14 1v30" strokeDasharray="4 2" /><path d="M8 12h5v13H8zM17 12h5v13h-5z" /></g>),
  reference: (<g><circle cx="19" cy="10" r="9" fill="#fff" stroke={INK} strokeWidth="1.5" /><text x="19" y="15" fontSize="14" fill={INK} textAnchor="middle" fontFamily="Open Sans">1</text><path d="M1 9h9" stroke={INK} strokeWidth="2" /><path d="M16 20v-3M28 17v3M28 28v3h-3M16 28v3h3M18 22h8v6h-8z" stroke={BLUE} strokeWidth="1.5" fill="#cfe5fa" /></g>),
  port: (<g stroke={INK} strokeWidth="1.5"><path d={page} /><path d="M8 15v-4h4M20 11h4v4M8 23v4h4M24 23v4h-4" /></g>),
  switchW: (<g stroke={INK} strokeWidth="1.5"><path d="M2 2h19v14H2z" fill="#e4e6ea" /><path d="M2 3.500h19" strokeWidth="3" /><path d="M11 15h19v15H11z" fill="#e4e6ea" /><path d="M11 16.500h19" strokeWidth="3" /><path d="M31 9c0-4-3-5-6-5l3-3M1 20c0 5 3 6 6 6l-3-3" /></g>),
  closeW: (<g><path d="M2 4h11v11H2z" fill="#e4e6ea" stroke={INK} strokeWidth="1.5" /><path d="M16 4h11v11H16zM2 18h11v11H2zM16 18h11v11H16z" fill="#f5f5f5" stroke="#bbb" /><path d="M19 19l10 11M29 19L19 30" stroke="#e02b20" strokeWidth="4" /></g>),
  tabsW: (<g stroke={INK} strokeWidth="1.5"><path d="M4 3h24v26H4z" fill="#e4e6ea" /><path d="M4 5h24M12 3v5M20 3v5" strokeWidth="2" /></g>),
  tileW: (<g stroke={INK} strokeWidth="1.5"><path d="M8 2h16v12H8zM8 18h16v12H8z" fill="#e4e6ea" /><path d="M8 4h16M8 20h16" strokeWidth="3" /></g>),
  ui: (<g stroke={INK} strokeWidth="1.5"><path d="M2 3h27v24H2z" fill="#e4e6ea" /><path d="M2 4.500h27" strokeWidth="3" /><path d="M2 11h27M8 11v16M9 6v4M16 6v4M23 6v4" strokeWidth="1" /><path d="M24 31V22c-3-2-4-6-1-8v5l3 1 2-1v-5c3 2 3 6 0 8v9z" fill="#cfe0f0" /></g>),
};

type Tool = { k: string; w: string; l1: string; l2?: string; off?: boolean; drop?: boolean };
type Panel = { title: string; w: string; tools: Tool[]; launcher?: boolean };

const PANELS: Panel[] = [
  {
    title: "Graphismes", w: "w-[374px] pl-[5px]", launcher: true,
    tools: [
      { k: "template", w: "w-[46px]", l1: "Gabarits", l2: "de vues", drop: true },
      { k: "visibility", w: "w-[56px]", l1: "Visibilité/", l2: "Graphismes" },
      { k: "filter", w: "w-[29px]", l1: "Filtres" },
      { k: "thin", w: "w-[33px]", l1: "Lignes", l2: "fines" },
      { k: "showHidden", w: "w-[80px]", l1: "Afficher", l2: "les lignes cachées" },
      { k: "removeHidden", w: "w-[79px]", l1: "Supprimer", l2: "les lignes cachées" },
      { k: "profile", w: "w-[45px]", l1: "Profil", l2: "de coupe", off: true },
    ],
  },
  {
    title: "Présentation", w: "w-[145px] pl-[2px]",
    tools: [
      { k: "teapot", w: "w-[34px]", l1: "Rendu" },
      { k: "teapotCloud", w: "w-[59px]", l1: "Rendu", l2: "dans le Cloud" },
      { k: "gallery", w: "w-[49px]", l1: "Galerie", l2: "de rendus" },
    ],
  },
  {
    title: "Créer", w: "w-[513px] pl-[2px]",
    tools: [
      { k: "house", w: "w-[34px]", l1: "Vue", l2: "3D", drop: true },
      { k: "section", w: "w-[34px]", l1: "Coupe", off: true },
      { k: "callout", w: "w-[45px]", l1: "Repère", off: true, drop: true },
      { k: "plan", w: "w-[48px]", l1: "Vues", l2: "en plan", drop: true },
      { k: "elevation", w: "w-[54px]", l1: "Elévation", off: true, drop: true },
      { k: "drafting", w: "w-[48px]", l1: "Vue", l2: "de dessin" },
      { k: "duplicate", w: "w-[54px]", l1: "Dupliquer", l2: "la vue", drop: true },
      { k: "legend", w: "w-[54px]", l1: "Légendes", drop: true },
      { k: "schedule", w: "w-[80px]", l1: "Nomenclatures", drop: true },
      { k: "scope", w: "w-[56px]", l1: "Zone", l2: "de définition", off: true },
    ],
  },
  {
    title: "Composition de feuille", w: "w-[422px] pl-[2px]",
    tools: [
      { k: "sheet", w: "w-[32px]", l1: "Feuille" },
      { k: "sheetView", w: "w-[30px]", l1: "Vue", off: true },
      { k: "title", w: "w-[52px]", l1: "Cartouche", off: true },
      { k: "revision", w: "w-[42px]", l1: "Révisions" },
      { k: "guide", w: "w-[54px]", l1: "Quadrillage", l2: "de guidage", off: true },
      { k: "match", w: "w-[113px]", l1: "Ligne de correspondance", off: true },
      { k: "reference", w: "w-[45px]", l1: "Référence", l2: "de vue" },
      { k: "port", w: "w-[50px]", l1: "Fenêtres", off: true, drop: true },
    ],
  },
  {
    title: "Fenêtres", w: "w-[297px] pl-[8px] border-r-0",
    tools: [
      { k: "switchW", w: "w-[76px]", l1: "Basculer", l2: "entre les fenêtres", drop: true },
      { k: "closeW", w: "w-[40px]", l1: "Fermer", l2: "Inactif" },
      { k: "tabsW", w: "w-[47px]", l1: "Vues", l2: "en onglets" },
      { k: "tileW", w: "w-[63px] border-r border-[#cfcfcf]", l1: "Vues", l2: "en mosaïque" },
      { k: "ui", w: "w-[62px]", l1: "Interface", l2: "utilisateur", drop: true },
    ],
  },
];

function ToolButton({ t }: { t: Tool }) {
  return (
    <button type="button" className={`flex h-[60px] flex-col items-center text-[9px] leading-[12px] whitespace-nowrap text-[#333] ${t.w} ${t.off ? "opacity-40" : ""}`}>
      <Svg c="mt-[3px] h-[25px] w-[25px]">{RI[t.k]}</Svg>
      <span className="mt-[3px]">{t.l1}</span>
      {t.l2 ? (
        <span className="relative">
          {t.l2}
          {t.drop && <span className="absolute top-[-2px] -right-2"><Caret /></span>}
        </span>
      ) : (
        t.drop && <span className="mt-[2px]"><Caret /></span>
      )}
    </button>
  );
}

const REVIT_TABS: [string, string][] = [
  ["Fichier", "w-[43px] bg-[#2b7bb5] text-white"],
  ["Architecture", "w-[69px]"], ["Structure", "w-[54px]"], ["Acier", "w-[38px]"], ["Préfabrication", "w-[75px]"],
  ["Systèmes", "w-[56px]"], ["Insérer", "w-[44px]"], ["Annoter", "w-[50px]"], ["Analyser", "w-[52px]"],
  ["Volume et site", "w-[75px]"], ["Collaborer", "w-[61px]"], ["Vue", "w-[30px] bg-[#eeeeee]"], ["Gérer", "w-[40px]"],
  ["Compléments", "w-[76px]"], ["Outils d'interopérabilité", "w-[115px]"], ["BIM_SOFT", "w-[58px]"], ["Cloud2Model", "w-[74px]"],
  ["DiRootsOne", "w-[66px]"], ["EdgeWise Import", "w-[88px]"], ["As-Built Architecture", "w-[104px]"], ["As-Built Structure", "w-[91px]"],
  ["As-Built Systèmes", "w-[91px]"], ["As-Built Analyse", "w-[85px]"], ["pyRevit", "w-[47px]"], ["Speckle", "w-[48px]"], ["Modifier", "w-[53px]"],
];

const line = (d: string, stroke = INK) => <path d={d} stroke={stroke} strokeWidth="1.6" />;
const QAT: { w: string; icon: ReactNode | "drop" | "sep"; dim?: boolean }[] = [
  { w: "w-5", icon: <path d="M5 1h10c6 0 7 9 2 11l5 11h-5l-5-10h-2v10H5zM10 5v5c5 1 6-5 2-5z" fill="#2f74b8" /> },
  { w: "w-5", icon: line("M3 3h18v18H3zM3 6h18M9 6v15M12 10h7M12 14h7M12 18h7M5 10h2M5 14h2") },
  { w: "w-[22px]", icon: line("M2 19V5h7l2 3h8v3M2 19l4-8h17l-4 8z") },
  { w: "w-[19px]", icon: <g>{line("M3 3h18v18H3zM7 3v7h10V3M6 14h12v7")}<path d="M7 3h10v7H7z" fill="#8a94a1" /></g> },
  { w: "w-[19px]", icon: line("M3 9l7-4 7 4v9l-7 4-7-4zM8 4l6-3 7 4v9l-3 2M10 13v9"), dim: true },
  { w: "w-[9px]", icon: "drop" },
  { w: "w-5", icon: line("M3 10l7-7v4c8 0 11 5 10 13-2-5-5-7-10-7v4z") },
  { w: "w-[9px]", icon: "drop" },
  { w: "w-5", icon: line("M21 10l-7-7v4C6 7 3 12 4 20c2-5 5-7 10-7v4z"), dim: true },
  { w: "w-[9px]", icon: "drop" },
  { w: "w-5", icon: line("M6 9V2h12v7M2 9h20v9H2zM6 15h12v7H6zM8 18h8") },
  { w: "w-[6px]", icon: "sep" },
  { w: "w-[17px]", icon: line("M2 15h20v5H2zM6 15v3M10 15v3M14 15v3M18 15v3M2 8h20M5 5L2 8l3 3M19 5l3 3-3 3"), dim: true },
  { w: "w-[10px]", icon: "drop" },
  { w: "w-5", icon: line("M4 20L20 4M2 16l6 6M16 2l6 6M4 20l1-5M20 4l-1 5") },
  { w: "w-[19px]", icon: line("M2 13h8v7H2zM10 13l4-4M12 7a5 5 0 1 1 10 0 5 5 0 1 1-10 0M17 4v6") },
  { w: "w-[18px]", icon: <path d="M3 22L10 2h4l7 20h-4l-1.500-5H8.500L7 22zM9.500 14h5L12 6z" fill={INK} /> },
  { w: "w-2", icon: "sep" },
  { w: "w-[17px]", icon: line("M1 11l11-8 10 7-7 4zM4 12v8l8 3 8-4v-8M8 21v-6") },
  { w: "w-[10px]", icon: "drop" },
  { w: "w-[19px]", icon: line("M6 11a6 6 0 1 1 12 0 6 6 0 1 1-12 0M12 0l10 11-10 12"), dim: true },
  { w: "w-[19px]", icon: <g><path d="M2 4h8M2 12h7M2 20h6" stroke={INK} strokeWidth="3" /><path d="M14 4h8M13 12h9M12 20h10" stroke={INK} /><path d="M15 1L8 23" stroke="#2f8fe0" strokeWidth="1.5" /></g> },
  { w: "w-2", icon: "sep" },
  { w: "w-[19px]", icon: <g>{line("M2 2h8v9H2zM13 2h8v9h-8zM2 14h8v8H2z", "#9a9a9a")}<path d="M13 14l8 9M21 14l-8 9" stroke="#e02b20" strokeWidth="3" /></g> },
  { w: "w-[17px]", icon: line("M2 2h13v10H2zM2 4h13M9 11h13v11H9zM9 13h13M21 8c0-3-2-4-4-4M2 16c0 3 2 4 4 4") },
  { w: "w-[9px]", icon: "drop" },
  { w: "w-[15px]", icon: line("M6 8h12M7 12l5 6 5-6z") },
];

const PROPS: { h?: string; n?: string; dim?: boolean; v?: string }[] = [
  { h: "Graphismes" }, { n: "Echelle de la vue" }, { n: "Valeur de l'échelle", v: "1:", dim: true }, { n: "Niveau de détail" }, { n: "Visibilité des éléments" },
  { n: "Remplacements visibilité / graphismes" }, { n: "Options d'affichage des graphismes" }, { n: "Discipline" }, { n: "Afficher les lignes cachées" },
  { n: "Style d'affichage de l'analyse par défaut" }, { n: "Afficher les quadrillages" }, { n: "Trajectoire du soleil" },
  { h: "Etendues" }, { n: "Cadrer la vue" }, { n: "Zone cadrée visible" }, { n: "Cadrage de l'annotation" }, { n: "Délimitation éloignée active" },
  { n: "Décalage de la délimitation éloignée", dim: true }, { n: "Zone de définition" }, { n: "Zone de coupe" },
  { h: "Caméra" }, { n: "Paramètres de rendu" }, { n: "Orientation verrouillée", dim: true }, { n: "Mode de projection" }, { n: "Elévation de l'oeil" },
  { n: "Elévation cible" }, { n: "Position de la caméra", dim: true },
  { h: "Données d'identification" }, { n: "Gabarit de vue" }, { n: "Nom de la vue" }, { n: "Dépendance", dim: true }, { n: "Titre sur la feuille" },
  { h: "Phase de construction" }, { n: "Filtre des phases" }, { n: "Phase" },
];

function PropertiesPalette() {
  return (
    <aside className="flex w-[338px] shrink-0 flex-col border-r-2 border-[#cfcfcf] bg-[#f0f0f0]">
      <h2 className="flex h-[18px] items-center border-b border-[#cfcfcf] pl-[3px] text-[9px] text-[#444]">Propriétés</h2>
      <div className="flex h-14 items-center border-b border-[#cfcfcf] pl-[3px]">
        <span className="flex h-[52px] w-[53px] items-center justify-center border border-[#bdbdbd]"><Svg c="h-[26px] w-[26px]">{RI.house}</Svg></span>
        <span className="ml-[4px] text-[9px] text-[#444]">Vue 3D</span>
      </div>
      <div className="mt-[2px] flex h-[18px] items-center border border-[#a8a8a8] bg-[#dedede]">
        <select aria-label="Type de vue" className="w-[140px] appearance-none pl-[3px] text-[9px]"><option>Vue 3D: {"{3D}"}</option></select>
      </div>
      <ul className="flex h-[504px] flex-col bg-white text-[8px] whitespace-nowrap">
        {PROPS.map((p) => (
          <li key={p.h ?? p.n} className={`flex min-h-0 flex-1 items-center overflow-hidden ${p.h ? "bg-[#dcdcdc] pl-[2px]" : "border-b border-dotted border-[#777] pl-[7px]"} ${p.dim ? "text-[#808080]" : "text-black"}`}>
            {p.h ?? p.n}
            {p.v && <span className="ml-[10px]">{p.v}</span>}
          </li>
        ))}
      </ul>
      <div className="flex-1 bg-white" />
      <div className="flex h-[23px] items-center justify-between pr-[3px] pl-[3px] text-[9px]">
        <a href="#proprietes" className="text-[#0563c1] underline">Aide des propriétés</a>
        <button type="button" className="h-[17px] w-[58px] border border-[#bfbfbf] bg-[#cccccc] text-[#838383]">Appliquer</button>
      </div>
    </aside>
  );
}

function ViewScene() {
  return (
    <svg aria-label="ViewCube" role="img" viewBox="0 0 400 240" className="absolute top-0 right-0 h-[240px] w-[400px]" fill="none">
      <ellipse cx="314" cy="94" rx="46" ry="25" stroke="#e6e6e6" strokeWidth="8" />
      <ellipse cx="314" cy="94" rx="52" ry="29" stroke="#bdbdbd" strokeDasharray="2 1" />
      <ellipse cx="314" cy="94" rx="40" ry="21" stroke="#bdbdbd" strokeDasharray="2 1" />
      <ellipse cx="318" cy="97" rx="30" ry="11" fill="#bcbcbc" opacity="0.6" />
      <g stroke="#9a9a9a">
        <path d="M287 55l25-10 29 9-24 12z" fill="#ececec" />
        <path d="M287 55l30 11v37l-28-14z" fill="#dfdfdf" />
        <path d="M317 66l24-12v31l-24 18z" fill="#cfcfcf" />
      </g>
      <g fill="#9b9b9b" fontFamily="Open Sans" fontWeight="600">
        <text x="303" y="56" fontSize="7" transform="rotate(16 303 56)">HAUT</text>
        <text x="289" y="79" fontSize="8" transform="rotate(18 289 79)">AVANT</text>
        <text x="319" y="90" fontSize="6" transform="rotate(-28 319 90)">DROITE</text>
        <text x="276" y="80" fontSize="8">O</text>
        <text x="275" y="118" fontSize="9">S</text>
        <text x="351" y="113" fontSize="8">E</text>
        <text x="340" y="78" fontSize="7">N</text>
      </g>
      <path d="M118 0L260 51M45 20L260 98M45 67L260 145M324 74L386 97M324 121L386 143M324 168L386 191" stroke="#000" strokeWidth="1.5" />
      <rect x="358" y="137" width="27" height="93" rx="4" fill="#ececec" fillOpacity="0.7" stroke="#bdbdbd" strokeWidth="1.5" />
      <path d="M362 184h20" stroke="#bdbdbd" />
      <circle cx="380" cy="142" r="3" stroke="#aaa" /><circle cx="380" cy="225" r="3" stroke="#aaa" />
      <circle cx="370" cy="162" r="7" stroke="#9c9c9c" strokeWidth="1.2" /><circle cx="370" cy="162" r="3.5" stroke="#9c9c9c" />
      <path d="M373 165h8v7h-8z" fill="#8db8e0" />
      <path d="M369 178h4l-2 2.500zM369 212h4l-2 2.500z" fill="#888" />
      <path d="M366 190h8v9h-8z" fill="#a3c594" stroke="#8a8a8a" strokeWidth="0.8" /><circle cx="374" cy="199" r="3" fill="#e8e8e8" stroke="#8a8a8a" /><path d="M376 201l3 3" stroke="#8a8a8a" strokeWidth="1.5" />
    </svg>
  );
}

const VIEW_TOOLS: ReactNode[] = [
  <g key="a"><path d="M2 2h20v20H2z" fill="#d7d7d7" stroke={INK} strokeWidth="2" /><path d="M6 6h6v6H6zM12 12h6v6h-6z" fill={INK} /></g>,
  line("M3 8l6-5h13v12l-6 6H3zM3 8h13v13M16 8l6-5"),
  <g key="c"><circle cx="10" cy="11" r="6" fill="#ffc93c" stroke="#b97900" strokeWidth="1.5" /><path d="M14 12l8 10M22 12l-8 10" stroke="#e02b20" strokeWidth="3" /></g>,
  <g key="d"><circle cx="10" cy="9" r="7" fill="#bcd9f2" stroke={BLUE} strokeWidth="1.5" /><path d="M3 20h10" stroke={INK} strokeWidth="2" /><path d="M14 12l8 10M22 12l-8 10" stroke="#e02b20" strokeWidth="3" /></g>,
  <g key="e">{line("M2 6l5 12h6l-3-12zM10 6l5-3")}<circle cx="18" cy="13" r="4" fill="#cfe5fa" stroke={BLUE} strokeWidth="1.5" /><path d="M18 17v5" stroke={BLUE} strokeWidth="2" /></g>,
  <g key="f">{line("M1 17h8V7h14M6 3v6M19 7v12", BLUE)}<path d="M10 10l10 10M20 10L10 20" stroke="#e02b20" strokeWidth="3" /></g>,
  <g key="g">{line("M1 17h6V7h12M6 3v6", BLUE)}<path d="M9 20v-8" stroke="#e02b20" strokeWidth="2" /><circle cx="18" cy="11" r="4" fill="#cfe5fa" stroke={BLUE} strokeWidth="1.5" /></g>,
  <g key="h">{line("M3 20V9l8-7 8 7v4M8 20V10")}<path d="M11 13h11v9H11z" fill="#6aa78c" stroke={INK} /></g>,
  line("M2 6l7 12 4-6M9 18l4 2M13 12a4 4 0 0 0 6 4l3-10"),
  <g key="j"><circle cx="12" cy="9" r="5" fill="#cfe5fa" stroke={BLUE} strokeWidth="1.5" /><path d="M12 15v6" stroke={BLUE} strokeWidth="2.5" /></g>,
  line("M3 4v18h9M3 4h18v6M7 1v6M14 1v6M13 13h9v9h-9zM17 16h3"),
  <g key="l">{line("M2 8h14v14H2zM6 3h14v12M9 3v19M2 14h14")}<path d="M5 12h8v6H5z" fill="#e02b20" /><circle cx="19" cy="8" r="4" fill="#cfe5fa" stroke={BLUE} /></g>,
  line("M3 9h12v13H3zM7 5h12v12M11 1h12v11M9 9v13"),
  <g key="n">{line("M2 4h20M3 1v6M21 1v10M3 7v13", INK)}<path d="M12 14h10v8H12z" fill="#777" /><path d="M4 20h8" stroke={INK} strokeDasharray="2 2" /></g>,
];

function RevitView() {
  return (
    <div className="flex min-w-0 flex-1 flex-col bg-[#f2f2f2]">
      <div className="flex h-[17px] items-center justify-end bg-[#cacaca] pr-1"><Svg c="h-[10px] w-[8px]" vb="0 0 12 16"><path d="M1 3h10" stroke="#333" strokeWidth="2" /><path d="M1 7h10l-5 6z" fill="#333" /></Svg></div>
      <div className="flex min-h-0 flex-1 border-t-2 border-white">
        <div className="relative flex-1 overflow-hidden"><div className="absolute inset-y-0 right-0 w-full border-r border-white"><ViewScene /></div></div>
        <div className="flex w-[12px] flex-col items-center justify-between py-1 text-[#555]">
          <Svg c="h-[7px] w-[7px]" vb="0 0 8 8"><path d="M1 6l3-4 3 4" stroke="currentColor" strokeWidth="1.6" /></Svg>
          <span className="mb-2 h-[12px] w-[12px] bg-[#cdcdcd]" />
          <Svg c="h-[7px] w-[7px]" vb="0 0 8 8"><path d="M1 2l3 4 3-4" stroke="currentColor" strokeWidth="1.6" /></Svg>
        </div>
      </div>
      <div className="flex h-[15px] items-center border-t border-b-2 border-white bg-[#f0f0f0] text-[9px]">
        <span className="ml-[22px] w-[42px]">1 : 100</span>
        <div className="flex w-[234px]">
          {VIEW_TOOLS.map((t, i) => (
            <button key={i} type="button" aria-label="Commande de vue" className="flex flex-1 justify-center"><Svg c="h-[12px] w-[13px]" vb="0 0 24 24">{t}</Svg></button>
          ))}
        </div>
        <span className="ml-[4px] w-2 font-bold">‹</span>
        <span className="ml-[680px] h-full w-[14px] bg-[#cdcdcd]" />
        <span className="ml-auto mr-[20px] font-bold text-[#555]">›</span>
      </div>
    </div>
  );
}

const STATUS_TOOLS: ReactNode[] = [
  <path key="1" d="M3 8a4 3 0 0 1 8 0 4 3 0 0 1-8 0M11 8a4 3 0 0 1 8 0 4 3 0 0 1-8 0" stroke="#d9a400" strokeWidth="2.5" />,
  <g key="2"><path d="M2 16h12M2 20h12M4 12l8-8v12z" stroke={BLUE} strokeWidth="1.5" /><path d="M13 2l7 8M20 2l-7 8" stroke="#e02b20" strokeWidth="2.5" /></g>,
  <path key="3" d="M3 3h12v4H5v4h10v4H3M9 15v7" stroke="#e07020" strokeWidth="2.5" />,
  <g key="4"><path d="M2 5l8-3v16l-8 4z" fill="#a9d3f5" stroke={BLUE} strokeWidth="1.5" /><path d="M13 2l7 8M20 2l-7 8" stroke="#e02b20" strokeWidth="2.5" /></g>,
  <path key="5" d="M8 1v14M1 8h14M6 3l2-2 2 2M6 13l2 2 2-2M3 6L1 8l2 2" stroke="#222" strokeWidth="1.6" />,
];

function RevitStatus() {
  return (
    <footer className="flex h-[19px] items-center bg-[#cbcbcb] text-[9px] text-[#111]">
      <p className="w-[1172px] pl-[2px]">Cliquez pour sélectionner. Appuyez sur TAB pour afficher d'autres options, sur CTRL pour ajouter et sur MAJ pour désactiver.</p>
      <Svg c="mr-1 h-[13px] w-4" vb="0 0 24 24"><path d="M2 12h9v10H2z" fill="#a9d3f5" stroke={BLUE} strokeWidth="1.5" /><path d="M8 7h10M13 2v10" stroke="#3b9b2f" strokeWidth="3" /><path d="M19 10v12" stroke={INK} strokeWidth="3" /></Svg>
      <span className="flex h-[14px] w-[163px] items-center bg-white pr-1">
        <select aria-label="Sous-projet actif" className="flex-1 appearance-none"><option></option></select><Chevron c="text-[#999]" />
      </span>
      <Svg c="ml-[7px] h-3 w-3" vb="0 0 24 24"><path d="M6 2h13v8H6zM9 10L3 22h12l-4-8" fill="#aaa" stroke="#888" /></Svg>
      <span className="ml-1 w-[22px]">:0</span>
      <Svg c="h-[13px] w-[13px]" vb="0 0 24 24">{line("M2 2h20v20H2zM2 5h20M6 10h3M12 10h6M9 14h9M9 18h9")}</Svg>
      <Svg c="ml-2 mr-[7px] h-[12px] w-[12px]" vb="0 0 24 24"><path d="M3 2h18v20H3z" fill="#9d9d9d" /><path d="M7 6l10 12" stroke="#ddd" strokeWidth="2" /></Svg>
      <span className="flex h-[14px] w-[163px] items-center bg-white pr-1 pl-[2px]">
        <select aria-label="Variante" className="flex-1 appearance-none text-[#808080]"><option>Modèle de base</option></select><Chevron c="text-[#999]" />
      </span>
      <div className="ml-auto flex items-center">
        {STATUS_TOOLS.map((t, i) => (
          <button key={i} type="button" aria-label="Sélection" className="w-[21px]">
            <Svg c="h-[14px] w-[15px]" vb="0 0 24 24">{t}<path d="M11 8v13l3-3 2 5 2-1-2-5h5z" fill="#fff" stroke="#333" strokeWidth="1.2" /></Svg>
          </button>
        ))}
        <Svg c="mr-[7px] h-3 w-3" vb="0 0 24 24"><circle cx="12" cy="12" r="8" stroke="#999" strokeWidth="4" strokeDasharray="4 2" /></Svg>
        <Svg c="h-3 w-3" vb="0 0 24 24"><path d="M1 2h22l-8 10v10h-6V12z" fill="#76808d" stroke={INK} /></Svg>
        <span>:0</span>
        <span className="mr-1 ml-[52px] h-4 w-px bg-[#b5b5b5]" />
      </div>
    </footer>
  );
}

function RevitWindow() {
  return (
    <section aria-label="Autodesk Revit" className="flex min-h-0 flex-1 flex-col bg-[#eeeeee]">
      <header className="flex h-[23px] items-center bg-[#cacaca] pb-1">
        <div className="flex w-[418px] items-center">
          {QAT.map((q, i) =>
            q.icon === "drop" ? (
              <span key={i} className={`flex justify-center ${q.w}`}><Caret /></span>
            ) : q.icon === "sep" ? (
              <span key={i} className={`flex justify-center ${q.w}`}><span className="h-[18px] w-px bg-[#b0b0b0]" /></span>
            ) : (
              <button key={i} type="button" aria-label="Accès rapide" className={`flex justify-center ${q.w} ${q.dim ? "opacity-40" : ""}`}><Svg c="h-[14px] w-[15px]" vb="0 0 24 24">{q.icon}</Svg></button>
            )
          )}
        </div>
        <h1 className="flex-1 text-center text-[9px] text-[#444]">Autodesk Revit 2022 - Projet2 - Vue 3D: {"{3D}"}</h1>
        <div className="flex w-[288px] items-center text-[9px] text-[#444]">
          <Svg c="ml-1 h-[7px] w-[5px]" vb="0 0 5 8"><path d="M5 0v8L0 4z" fill="#444" /></Svg>
          <Svg c="ml-[5px] h-[14px] w-[14px]" vb="0 0 24 24">{line("M4 10l2-7h4v18H2v-7zM14 3h4l2 7 2 4v7h-8zM10 9h4")}</Svg>
          <Svg c="ml-[6px] h-[14px] w-[14px]" vb="0 0 24 24"><circle cx="12" cy="7" r="6" fill="#5a8ee0" stroke="#24509a" /><path d="M2 23c0-6 5-9 10-9s10 3 10 9z" fill="#5a8ee0" stroke="#24509a" /></Svg>
          <span className="ml-1 w-[67px]">HW_lgi</span>
          <Caret />
          <Svg c="ml-2 h-[14px] w-[14px]" vb="0 0 24 24">{line("M1 3h4l4 12h10l3-9H6M10 18v3M18 18v3M8 10h12")}</Svg>
          <span className="mx-[7px] h-[18px] w-px bg-[#b0b0b0]" />
          <span className="flex h-[14px] w-[14px] items-center justify-center rounded-full border border-[#555] bg-white text-[10px] font-bold text-[#2b6cc4]">?</span>
          <span className="ml-1"><Caret /></span>
          <div className="mr-1 ml-auto flex items-center gap-[10px]">
            {["M3 13h9", "M5 5V2h9v7h-3M2 5h9v8H2zM2 7h9", "M3 3l10 10M13 3L3 13"].map((d) => (
              <button key={d} type="button" aria-label="Fenêtre"><Svg c="h-[11px] w-[11px]" vb="0 0 16 16"><path d={d} stroke="#333" strokeWidth="2" /></Svg></button>
            ))}
          </div>
        </div>
      </header>
      <nav className="flex h-4 items-center bg-[#cacaca] text-[9px] text-[#333]">
        {REVIT_TABS.map(([n, c]) => (
          <button key={n} type="button" className={`h-4 shrink-0 whitespace-nowrap ${c}`}>{n}</button>
        ))}
        <span className="ml-[14px] flex h-[7px] w-3 items-center justify-center rounded-sm border border-[#444] bg-white"><svg aria-hidden="true" viewBox="0 0 6 4" className="h-[3px] w-1"><path d="M0 4h6L3 0z" /></svg></span>
        <span className="ml-1"><Caret /></span>
      </nav>
      <div className="flex h-[77px] border-b border-[#c8c8c8]">
        <div className="flex w-[72px] flex-col items-center border-r border-[#d6d6d6]">
          <button type="button" className="mt-[3px] flex h-[57px] w-[41px] flex-col items-center border border-[#2a78c9] bg-[#b5d5f2] text-[9px] text-[#333]">
            <Svg c="mt-[5px] h-[22px] w-[22px]">{RI.cursor}</Svg>
            <span className="mt-[2px]">Modifier</span>
          </button>
          <span className="mt-[1px] flex items-center gap-[5px] text-[9px] text-[#333]">Sélectionner <Caret /></span>
        </div>
        {PANELS.map((p) => (
          <div key={p.title} className={`flex shrink-0 flex-col border-r border-[#d6d6d6] ${p.w}`}>
            <div className="flex pt-[2px]">{p.tools.map((t) => <ToolButton key={t.k} t={t} />)}</div>
            <div className="flex items-center text-[9px] text-[#333]">
              <span className="flex-1 text-center">{p.title}</span>
              {p.launcher && <Svg c="mr-[5px] h-[6px] w-[6px]" vb="0 0 8 8"><path d="M1 1l6 6M7 2v5H2" stroke="#333" strokeWidth="1.5" /></Svg>}
            </div>
          </div>
        ))}
      </div>
      <div className="h-[21px] border-b-2 border-[#d5d5d5]" />
      <div className="flex min-h-0 flex-1">
        <PropertiesPalette />
        <RevitView />
      </div>
      <RevitStatus />
    </section>
  );
}

/* ------------------------------------------------------------------ */
/* Excel                                                               */
/* ------------------------------------------------------------------ */

function Launcher() {
  return <Svg c="h-[7px] w-[7px]" vb="0 0 8 8"><path d="M1 7V1h6M3 3l4 4M7 3.500V7H3.500" stroke="#555" /></Svg>;
}

function Group({ w, title, launch, children }: { w: string; title: string; launch?: boolean; children: ReactNode }) {
  return (
    <div className={`flex h-[71px] shrink-0 flex-col border-r border-[#9a9896] ${w}`}>
      <div className="flex flex-1">{children}</div>
      <div className="flex h-[11px] items-center pr-[3px] text-[9px] leading-[11px] text-[#555]">
        <span className="flex-1 text-center">{title}</span>
        {launch && <Launcher />}
      </div>
    </div>
  );
}

function Big({ w, icon, lines, drop }: { w: string; icon: ReactNode; lines: string[]; drop?: boolean }) {
  return (
    <button type="button" className={`flex flex-col items-center pt-[5px] text-[9px] leading-[13px] whitespace-nowrap text-[#444] ${w}`}>
      <Svg c="h-[24px] w-[24px]">{icon}</Svg>
      {lines.map((l, i) => (
        <span key={l} className="flex items-center gap-1">{l}{drop && lines.length > 1 && i === lines.length - 1 && <Chevron />}</span>
      ))}
      {drop && lines.length === 1 && <span className="flex h-[13px] items-center"><Chevron /></span>}
    </button>
  );
}

function Cell({ w, children }: { w: string; children: ReactNode }) {
  return <button type="button" aria-label="Commande" className={`flex h-[18px] shrink-0 items-center justify-center ${w}`}>{children}</button>;
}
const Sep = ({ c }: { c: string }) => <span className={`h-6 w-px shrink-0 bg-[#d0cecc] ${c}`} />;
const lines4 = (rows: [number, number][], y0 = 2) => (
  <Svg c="h-[13px] w-[13px]" vb="0 0 16 16">
    {rows.map(([a, b], i) => (<path key={i} d={`M${a} ${y0 + i * 4}H${b}`} stroke="#444" strokeWidth="1.2" />))}
  </Svg>
);

const tableIcon = (extra: ReactNode) => (
  <g><path d="M2 4h27v24H2zM2 12h27M2 20h27M11 4v24M20 4v24" fill="#fff" stroke="#444" strokeWidth="1.4" />{extra}</g>
);
const brush = <g><path d="M31 11L20 25" stroke="#555" strokeWidth="3" /><path d="M21 22c-5 0-5 5-9 7 5 3 11 1 11-5z" fill="#2f8fdc" stroke="#1f6fb5" /></g>;

function ExcelRibbon() {
  return (
    <div className="flex h-[74px] bg-[#f3f2f1]">
      <Group w="w-[79px]" title="Presse-papiers" launch>
        <Big w="ml-[5px] w-10" drop lines={["Coller"]} icon={<g><path d="M3 6h19v24H3z" fill="#fde3b8" stroke="#e8891b" strokeWidth="2" /><path d="M8 3h9v5H8z" fill="#fff" stroke="#666" strokeWidth="1.5" /><path d="M16 13h14v18H16z" fill="#fff" stroke="#444" strokeWidth="1.5" /></g>} />
        <div className="flex flex-1 flex-col gap-[4px] pt-[2px]">
          <Cell w="w-[12px]"><Svg c="h-[14px] w-[12px]" vb="0 0 16 20"><path d="M4 1l6 12M12 1L6 13" stroke="#555" strokeWidth="1.3" /><circle cx="4" cy="16" r="2.5" stroke="#2f8fdc" strokeWidth="1.5" /><circle cx="12" cy="16" r="2.5" stroke="#2f8fdc" strokeWidth="1.5" /></Svg></Cell>
          <span className="flex items-center gap-2"><Svg c="h-[13px] w-[12px]" vb="0 0 16 16"><path d="M5 13H1V1h8v2M5 4h6l4 3v8H5zM8 9h4M8 12h4" stroke="#555" strokeWidth="1.2" /></Svg><Chevron /></span>
          <Svg c="h-[13px] w-[13px]" vb="0 0 16 16"><path d="M14 1L8 8M6 6l5 4" stroke="#555" strokeWidth="2" /><path d="M5 7l5 4-4 4-5-5z" fill="#fbc78d" stroke="#e8891b" /></Svg>
        </div>
      </Group>

      <Group w="w-[185px]" title="Police" launch>
        <div className="flex flex-1 flex-col gap-[6px] pt-[6px] pl-[6px] text-[10px] text-[#333]">
          <div className="flex h-5 items-center">
            <span className="flex h-[18px] w-[98px] items-center border border-[#ababab] bg-white pr-[3px]"><select aria-label="Police" className="flex-1 appearance-none pl-[2px]"><option>Calibri</option></select><Chevron /></span>
            <span className="ml-[2px] flex h-[18px] w-[34px] items-center border border-[#ababab] bg-white pr-[3px]"><select aria-label="Taille" className="w-[18px] flex-1 appearance-none pl-[2px]"><option>11</option></select><Chevron /></span>
            <Cell w="w-5"><Svg c="h-[15px] w-[16px]" vb="0 0 18 16"><path d="M1 15L6 2l5 13M3 11h6" stroke="#444" strokeWidth="1.3" /><path d="M12 5l2.500-3L17 5" stroke="#2f8fdc" strokeWidth="1.3" /></Svg></Cell>
            <Cell w="w-5"><Svg c="h-[15px] w-[16px]" vb="0 0 18 16"><path d="M1 15L5.500 5 10 15M3 12h5" stroke="#444" strokeWidth="1.3" /><path d="M12 2l2.500 3L17 2" stroke="#2f8fdc" strokeWidth="1.3" /></Svg></Cell>
          </div>
          <div className="flex h-5 items-center text-[11px]">
            <Cell w="w-[18px]"><b>G</b></Cell>
            <Cell w="w-[20px]"><i className="font-['Liberation_Serif',serif]">I</i></Cell>
            <Cell w="w-[18px]"><u>S</u></Cell>
            <Cell w="w-[10px]"><Chevron /></Cell>
            <Sep c="mr-[2px] ml-[5px]" />
            <Cell w="w-[18px]"><Svg c="h-[14px] w-[14px]" vb="0 0 16 16"><path d="M1 1h14v13M1 1v13M8 1v13M1 7.500h14" stroke="#555" strokeDasharray="1 1.5" /><path d="M0 15h16" stroke="#222" strokeWidth="1.5" /></Svg></Cell>
            <Cell w="w-[10px]"><Chevron /></Cell>
            <Sep c="mr-[3px] ml-[5px]" />
            <Cell w="w-[18px]"><Svg c="h-[15px] w-[14px]" vb="0 0 16 18"><path d="M3 8l5-6 5 6-6 5z" stroke="#555" strokeWidth="1.2" /><path d="M12 5c2 1 3 4 2 7" stroke="#2f8fdc" strokeWidth="2" /><path d="M0 14h16v4H0z" fill="#ffff00" /></Svg></Cell>
            <Cell w="w-[10px]"><Chevron /></Cell>
            <Cell w="ml-[3px] w-[18px]"><Svg c="h-[15px] w-[14px]" vb="0 0 16 18"><path d="M3.500 12L8 1l4.500 11M5 9h6" stroke="#555" strokeWidth="1.4" /><path d="M0 14h16v4H0z" fill="#ff0000" /></Svg></Cell>
            <Cell w="w-[10px]"><Chevron /></Cell>
          </div>
        </div>
      </Group>

      <Group w="w-[302px]" title="Alignement" launch>
        <div className="flex flex-1 flex-col gap-[6px] pt-[6px] pl-[5px] text-[9px] text-[#444]">
          <div className="flex h-5 items-center">
            <Cell w="w-5">{lines4([[2, 14], [4, 12], [2, 14]], 1)}</Cell>
            <Cell w="w-5">{lines4([[2, 14], [4, 12], [2, 14]], 4)}</Cell>
            <Cell w="ml-px w-[18px] border border-[#999] bg-[#cfcdcb]">{lines4([[2, 14], [4, 12], [2, 14]], 6)}</Cell>
            <Sep c="ml-[2px]" />
            <Cell w="ml-[2px] w-5"><Svg c="h-[14px] w-[14px] overflow-visible" vb="0 0 16 16"><text x="4" y="12" fontSize="8" fill="#444" transform="rotate(-45 4 12)" fontFamily="Open Sans">ab</text><path d="M7 15l8-8M15 7v4M15 7h-4" stroke="#2f8fdc" strokeWidth="1.3" /></Svg></Cell>
            <Cell w="w-2"><Chevron /></Cell>
            <Sep c="ml-[12px]" />
            <Cell w="ml-[4px] w-[18px]"><Svg c="h-[15px] w-[13px] overflow-visible" vb="0 0 16 18"><text x="1" y="9" fontSize="9" fill="#444" fontFamily="Open Sans">ab</text><text x="1" y="17" fontSize="9" fill="#444" fontFamily="Open Sans">c</text><path d="M14 9v4H8M10 10.500L7.500 13l2.500 2.500" stroke="#2f8fdc" strokeWidth="1.4" /></Svg></Cell>
            <span className="whitespace-nowrap">Renvoyer à la ligne automatiquement</span>
          </div>
          <div className="flex h-5 items-center">
            <Cell w="w-5">{lines4([[2, 14], [2, 10], [2, 14], [2, 10]])}</Cell>
            <Cell w="w-5">{lines4([[2, 14], [4, 12], [2, 14], [4, 12]])}</Cell>
            <Cell w="ml-px w-[18px]">{lines4([[2, 14], [6, 14], [2, 14], [6, 14]])}</Cell>
            <Sep c="ml-[2px]" />
            <Cell w="ml-[2px] w-5"><Svg c="h-[13px] w-[13px]" vb="0 0 16 16"><path d="M2 2h12M9 6h5M9 10h5M2 14h12" stroke="#444" strokeWidth="1.2" /><path d="M7 8H1M3.500 5.500L1 8l2.500 2.500" stroke="#2f8fdc" strokeWidth="1.3" /></Svg></Cell>
            <Cell w="w-[18px]"><Svg c="h-[13px] w-[13px]" vb="0 0 16 16"><path d="M2 2h12M9 6h5M9 10h5M2 14h12" stroke="#444" strokeWidth="1.2" /><path d="M1 8h6M4.500 5.500L7 8l-2.500 2.500" stroke="#2f8fdc" strokeWidth="1.3" /></Svg></Cell>
            <Sep c="ml-[2px]" />
            <Cell w="ml-[4px] w-[18px]"><Svg c="h-[13px] w-[13px]" vb="0 0 16 16"><path d="M1 1h14v14H1zM1 4h14M1 12h14M8 1v3M8 12v3" stroke="#444" /><path d="M2 4.500h12v7H2z" fill="#d6eafa" /><path d="M3 8h10M5 6L3 8l2 2M11 6l2 2-2 2" stroke="#2f8fdc" strokeWidth="1.2" /></Svg></Cell>
            <span className="whitespace-nowrap">Fusionner et centrer</span>
            <Cell w="w-5"><Chevron /></Cell>
          </div>
        </div>
      </Group>

      <Group w="w-[125px]" title="Nombre" launch>
        <div className="flex flex-1 flex-col gap-[6px] pt-[6px] pl-[7px] text-[9px] text-[#333]">
          <div className="flex h-5 items-center"><span className="flex h-[18px] w-[111px] items-center border border-[#ababab] bg-white pr-[3px]"><select aria-label="Format de nombre" className="flex-1 appearance-none pl-[2px]"><option>Standard</option></select><Chevron /></span></div>
          <div className="flex h-5 items-center">
            <Cell w="w-[18px]"><Svg c="h-[13px] w-[14px]" vb="0 0 16 16"><path d="M1 3h13v7H1z" stroke="#444" strokeWidth="1.2" /><path d="M4 8c-1-2 0-3 2-3M9 5l2 3" stroke="#444" /><path d="M9 8h6v7H9z" fill="#fbc78d" stroke="#e8891b" strokeWidth="1.2" /></Svg></Cell>
            <Cell w="w-[10px]"><Chevron /></Cell>
            <Cell w="w-5"><span className="text-[14px]">%</span></Cell>
            <Cell w="w-5">000</Cell>
            <Sep c="ml-px" />
            <Cell w="w-[22px]"><Svg c="h-[15px] w-[14px] overflow-visible" vb="0 0 18 18"><path d="M8 4H1M4 1L1 4l3 3" stroke="#2f8fdc" strokeWidth="1.4" /><text x="10" y="8" fontSize="9" fill="#444" fontFamily="Open Sans">0</text><text x="3" y="17" fontSize="9" fill="#444" fontFamily="Open Sans">,00</text></Svg></Cell>
            <Cell w="w-5"><Svg c="h-[15px] w-[14px] overflow-visible" vb="0 0 18 18"><path d="M1 13h8M6 10l3 3-3 3" stroke="#2f8fdc" strokeWidth="1.4" /><text x="3" y="8" fontSize="9" fill="#444" fontFamily="Open Sans">,00</text><text x="11" y="17" fontSize="9" fill="#444" fontFamily="Open Sans">0</text></Svg></Cell>
          </div>
        </div>
      </Group>

      <Group w="w-[212px]" title="Styles">
        <Big w="ml-1 w-[80px]" drop lines={["Mise en forme", "conditionnelle"]} icon={tableIcon(<g><path d="M8 5h11v6H8zM8 21h11v6H8z" fill="#ff8f8f" stroke="#e04040" /><path d="M8 12h7v8H8z" fill="#8cc4f2" stroke="#2f8fdc" /></g>)} />
        <Big w="w-[78px]" drop lines={["Mettre sous forme", "de tableau"]} icon={tableIcon(<g><path d="M11 12h18v15H11z" fill="#8cc4f2" stroke="#2f8fdc" /><path d="M20 12v15M11 20h18" stroke="#2f8fdc" />{brush}</g>)} />
        <Big w="w-[46px]" drop lines={["Styles de", "cellules"]} icon={tableIcon(<g><path d="M6 9h20v14H6z" fill="#8cc4f2" stroke="#2f8fdc" />{brush}</g>)} />
      </Group>

      <Group w="w-[129px]" title="Cellules">
        <Big w="ml-1 w-[40px]" drop lines={["Insérer"]} icon={tableIcon(<g><path d="M12 12h18v8H12z" fill="#7ab8ef" stroke="#2f8fdc" /><path d="M14 16H1M6 11l-5 5 5 5" stroke="#2f8fdc" strokeWidth="1.8" /></g>)} />
        <Big w="w-[42px]" drop lines={["Supprimer"]} icon={tableIcon(<g><path d="M5 12h12v8H5z" fill="#7ab8ef" stroke="#2f8fdc" /><path d="M18 10l13 13M31 10L18 23" stroke="#f04848" strokeWidth="1.8" /></g>)} />
        <Big w="w-[40px]" drop lines={["Format"]} icon={tableIcon(<g><path d="M9 12h13v8H9z" fill="#7ab8ef" stroke="#2f8fdc" /><path d="M8 1h15M8 0v3M23 0v3" stroke="#2f8fdc" strokeWidth="1.5" /></g>)} />
      </Group>

      <Group w="w-[238px]" title="Édition">
        <div className="flex w-[126px] flex-col pt-px pl-[9px] text-[9px] text-[#444]">
          {[
            { l: "Somme automatique", g: "gap-2", i: <path d="M13 4V1H3l6 7-6 7h10v-3" stroke="#444" strokeWidth="1.4" /> },
            { l: "Recopier", g: "gap-[3px]", i: <g><path d="M1 1h14v14H1z" fill="#fff" stroke="#555" strokeWidth="1.3" /><path d="M1 2h14" stroke="#555" strokeWidth="2" /><path d="M8 5v8M5 10l3 3 3-3" stroke="#2f8fdc" strokeWidth="1.5" /></g> },
            { l: "Effacer", g: "gap-[3px]", i: <g><path d="M10 1l5 5-7 9H4l-3-4z" fill="#fff" stroke="#9b3fb5" strokeWidth="1.3" /><path d="M5 6l5 6-3 3H4l-3-4z" fill="#c98bd8" /></g> },
          ].map((r) => (
            <button key={r.l} type="button" className={`flex h-[18px] items-center whitespace-nowrap ${r.g}`}>
              <span className="flex items-center gap-[4px]"><Svg c="h-[12px] w-[12px]" vb="0 0 16 16">{r.i}</Svg>{r.l}</span>
              <Chevron />
            </button>
          ))}
        </div>
        <Big w="w-[46px]" drop lines={["Trier et", "filtrer"]} icon={<g><text x="3" y="14" fontSize="14" fill="#2f8fdc" fontFamily="Open Sans">A</text><text x="3" y="30" fontSize="14" fill="#555" fontFamily="Open Sans">Z</text><path d="M15 8h16l-6 8v9l-4-3v-6z" stroke="#555" strokeWidth="1.6" /></g>} />
        <Big w="w-[60px]" drop lines={["Rechercher et", "sélectionner"]} icon={<g stroke="#555" strokeWidth="1.6"><circle cx="20" cy="12" r="9" /><path d="M14 19L4 30" /></g>} />
      </Group>

      <Group w="w-[77px]" title="Compléments">
        <Big w="flex-1" lines={["Compléments"]} icon={<g stroke="#dd4a1b" strokeWidth="1.8"><path d="M3 2h26v28H3z" /><path d="M6 6h9v9H6zM18 6h8v9h-8zM6 18h9v9H6zM18 18h8v9h-8z" strokeWidth="1.4" /></g>} />
      </Group>
      <Group w="w-[63px]" title="">
        <Big w="flex-1" lines={["Analyse de", "données"]} icon={<g stroke="#555" strokeWidth="1.4"><path d="M1 1h30v30H1zM1 4h30M1 12h6M25 12h6M1 20h7M24 20h7M11 24v7M21 24v7" /><circle cx="16" cy="14" r="9.5" fill="#f5f5f5" /><path d="M11 13h3v6h-3z" fill="#999" /><path d="M14 9h3v10h-3z" fill="#999" /><path d="M18 8h3v11h-3z" fill="#7ab8ef" stroke="#2f8fdc" /><path d="M22 21l9 10" strokeWidth="2.5" /></g>} />
      </Group>
      <div className="flex flex-1 items-end justify-end pr-[8px] pb-[4px]"><Svg c="h-[6px] w-[8px]" vb="0 0 8 6"><path d="M1 5l3-3.500L7 5" stroke="#444" strokeWidth="1.4" /></Svg></div>
    </div>
  );
}

const COLS = "ABCDEFGHIJKLMNOPQ".split("");
const DATA: Record<number, string[]> = {
  2: ["X", "Y", "Z", "Radius"],
  3: ["4", "3", "2", "50"],
  4: ["3", "2", "1", "15"],
  5: ["2", "4", "6", "30"],
};
const ROWS = Array.from({ length: 17 }, (_, i) => i + 1);

function Sheet() {
  return (
    <table className="w-full table-fixed border-separate border-spacing-0 bg-white text-[10px]">
      <colgroup>
        <col className="w-[22px]" />
        {COLS.map((c) => <col key={c} />)}
      </colgroup>
      <thead>
        <tr className="h-[15px] bg-[#e6e6e6] text-[#333]">
          <th aria-label="Tout sélectionner" className="border-r border-b border-[#9f9f9f] p-0">
            <svg aria-hidden="true" viewBox="0 0 10 10" className="ml-auto mr-px h-[11px] w-[10px]"><path d="M10 0v10H0z" fill="#b0b0b0" /></svg>
          </th>
          {COLS.map((c) => (
            <th key={c} className={`border-r border-b p-0 text-[9px] leading-[12px] font-normal ${c === "G" ? "border-r-[#b8b8b8] border-b-[#217346] bg-[#d2d2d2] text-[#217346]" : "border-r-[#b8b8b8] border-b-[#9f9f9f]"}`}>{c}</th>
          ))}
        </tr>
      </thead>
      <tbody>
        {ROWS.map((r) => (
          <tr key={r} className={r === 17 ? "h-[11px]" : r % 5 === 0 ? "h-[36px]" : "h-[37px]"}>
            <th className={`border-r border-b border-b-[#c4c4c4] p-0 align-bottom text-[9px] font-normal ${r === 17 ? "leading-[8px]" : "leading-[12px]"} ${r === 8 ? "border-r-2 border-r-[#217346] bg-[#d2d2d2] text-[#217346]" : "border-r-[#9f9f9f] bg-[#e6e6e6] text-[#333]"}`}>{r < 17 ? r : ""}</th>
            {COLS.map((c, i) => {
              const v = DATA[r]?.[i];
              const sel = r === 8 && c === "G";
              return (
                <td key={c} className={`relative border-r border-b border-[#d4d4d4] p-0 ${r === 2 ? "text-center align-middle font-bold" : "pr-[2px] text-right align-bottom leading-[14px]"}`}>
                  {v ?? ""}
                  {sel && <span className="absolute -inset-[2px] border-2 border-[#217346]"><span className="absolute -right-[4px] -bottom-[4px] h-[5px] w-[5px] border border-white bg-[#217346]" /></span>}
                </td>
              );
            })}
          </tr>
        ))}
      </tbody>
    </table>
  );
}

function ExcelWindow() {
  return (
    <section aria-label="Excel" className="absolute top-[131px] left-[122px] flex w-3/4 flex-col border border-[#217346] bg-[#e6e6e6] shadow-[0_2px_8px_rgba(0,0,0,0.45)]">
      <header className="relative flex h-[27px] items-center overflow-hidden bg-[#217346] text-[10px] text-white">
        <Svg c="absolute top-0 right-0 h-[28px] w-[400px]" vb="0 0 400 28">
          <g stroke="#1b5f3a" strokeWidth="3"><circle cx="8" cy="13" r="4" /><path d="M12 13h222M60 27h30" /><circle cx="22" cy="33" r="13" strokeWidth="5" /><circle cx="234" cy="13" r="4" /><path d="M238 13h22l14 15" /><circle cx="287" cy="14" r="21" strokeWidth="6" /><path d="M278 24l17-17M283 6h13v13M314 28l9-9h30l20-19M353 28l28-28M340 28l20-20" /></g>
        </Svg>
        <label className="relative ml-[17px] flex items-center gap-[5px] text-[9px] whitespace-nowrap">
          Enregistrement automatique
          <input type="checkbox" className="h-3 w-[30px] appearance-none rounded-full border border-white bg-[radial-gradient(circle_at_6px_5px,white_3px,transparent_4px)]" />
        </label>
        <div className="relative ml-[10px] flex w-[100px] items-center">
          <Svg c="h-[13px] w-[13px]" vb="0 0 16 16"><path d="M1 1h14v14H1zM4 1v5h8V1M4 15v-5h8v5M7 12v3" stroke="#fff" strokeWidth="1.2" /></Svg>
          <Svg c="ml-[10px] h-[13px] w-[13px]" vb="0 0 16 16"><path d="M2 1v6h6M2 7c2-5 11-6 12 0 0 4-4 6-8 9" stroke="#fff" strokeWidth="1.4" /></Svg>
          <span className="ml-[3px]"><Chevron c="text-white" /></span>
          <Svg c="ml-[10px] h-[13px] w-[13px] opacity-30" vb="0 0 16 16"><path d="M14 1v6H8M14 7C12 2 3 1 2 7c0 4 4 6 8 9" stroke="#fff" strokeWidth="1.4" /></Svg>
          <span className="ml-[4px] opacity-30"><Chevron c="text-white" /></span>
          <Svg c="ml-[11px] h-[9px] w-[8px]" vb="0 0 8 10"><path d="M1 2h6M1 5l3 3 3-3" stroke="#fff" strokeWidth="1.3" /></Svg>
        </div>
        <h2 className="relative ml-[88px] flex items-center gap-1 text-[9px] whitespace-nowrap"><span>Cercles.xlsx</span><span>•</span><span>Enregistré dans ce PC</span><Chevron c="text-white" /></h2>
        <label className="absolute top-[4px] left-[626px] flex h-[19px] w-[295px] items-center bg-[#9fcfb5] pl-[16px]">
          <Svg c="h-[12px] w-[12px]" vb="0 0 16 16"><circle cx="10" cy="6" r="5" stroke="#185c37" strokeWidth="1.3" /><path d="M6 10l-5 5" stroke="#185c37" strokeWidth="1.3" /></Svg>
          <input aria-label="Rechercher dans Excel" placeholder="Rechercher" className="ml-[11px] flex-1 text-[9px] outline-none placeholder:text-[#185c37]" />
        </label>
        <div className="relative mr-[13px] ml-auto flex items-center text-[9px]">
          Laurent Gianviti
          <span className="mr-[21px] ml-2 flex h-[19px] w-[19px] items-center justify-center rounded-full bg-[#e3008c] text-[8px]">LG</span>
          <div className="flex w-[124px] justify-between">
            {["M1 2h14v12H1zM1 5h14M8 13V7M5 9.500L8 7l3 2.500", "M2 8h12", "M3 3h10v10H3z", "M3 3l10 10M13 3L3 13"].map((d) => (
              <button key={d} type="button" aria-label="Fenêtre Excel"><Svg c="h-[13px] w-[13px]" vb="0 0 16 16"><path d={d} stroke="#fff" strokeWidth="1.2" /></Svg></button>
            ))}
          </div>
        </div>
      </header>
      <nav className="flex h-[26px] items-center bg-[#f3f2f1] pl-[11px] text-[10px] text-[#444]">
        <div className="flex flex-1 gap-[23px]">
          {["Fichier", "Accueil", "Insertion", "Mise en page", "Formules", "Données", "Révision", "Affichage", "Automate", "Aide"].map((t) => (
            <button key={t} type="button" className={`h-[21px] border-b-2 ${t === "Accueil" ? "border-[#217346] font-semibold text-[#333]" : "border-transparent"}`}>{t}</button>
          ))}
        </div>
        <button type="button" className="mr-[7px] flex h-[19px] w-[97px] items-center justify-center gap-1 rounded-xs border border-[#8a8886] bg-white font-semibold text-[#217346]"><Svg c="h-[9px] w-[10px]" vb="0 0 16 14"><path d="M1 1h14v9H7l-3 3v-3H1z" stroke="#217346" strokeWidth="1.4" /></Svg>Commentaires</button>
        <button type="button" className="mr-[10px] flex h-[19px] w-[79px] items-center justify-center gap-1 rounded-xs border border-[#8a8886] bg-white font-semibold text-[#217346]"><Svg c="h-[10px] w-[10px]" vb="0 0 16 16"><path d="M8 4H1v11h13V9M5 11c0-5 3-7 9-7M11 1l3 3-3 3" stroke="#217346" strokeWidth="1.4" /></Svg>Partager<span className="ml-1"><Chevron c="text-[#217346]" /></span></button>
      </nav>
      <div className="bg-[#f3f2f1] shadow-[0_2px_4px_rgba(0,0,0,0.15)]"><ExcelRibbon /></div>
      <div className="mt-[10px] flex h-5 pr-[3px] pl-[5px] text-[10px] text-[#444]">
        <label className="flex w-[81px] items-center border border-[#c6c6c6] bg-white pr-[5px]">
          <input aria-label="Zone Nom" defaultValue="G8" className="w-0 flex-1 pl-[6px] outline-none" />
          <Caret c="text-[#777]" />
        </label>
        <span className="flex w-[25px] items-center justify-center text-[#999]">⋮</span>
        <div className="flex w-[87px] items-center justify-around border border-[#c6c6c6] bg-white">
          <Svg c="h-[10px] w-[10px]" vb="0 0 10 10"><path d="M1 1l8 8M9 1L1 9" stroke="#bbb" strokeWidth="1.3" /></Svg>
          <Svg c="h-[10px] w-[12px]" vb="0 0 12 10"><path d="M1 6l3 3 7-8" stroke="#bbb" strokeWidth="1.8" /></Svg>
          <i className="font-['Liberation_Serif',serif] text-[12px] font-bold">fx</i>
        </div>
        <label className="ml-[3px] flex flex-1 items-center border border-[#c6c6c6] bg-white pr-1">
          <input aria-label="Barre de formule" className="flex-1 outline-none" />
          <Chevron />
        </label>
      </div>
      <div className="mt-[9px] flex">
        <div className="min-w-0 flex-1 border-b border-[#9f9f9f]"><Sheet /></div>
        <div className="flex w-[17px] flex-col items-center pt-[2px]">
          <button type="button" aria-label="Défiler vers le haut" className="flex h-[12px] w-[12px] items-center justify-center border border-[#999] bg-white"><svg aria-hidden="true" viewBox="0 0 6 4" className="h-1 w-[5px]"><path d="M0 4h6L3 0z" /></svg></button>
          <span className="h-[290px] w-[12px] border border-[#999] bg-white" />
          <span className="w-[12px] flex-1 bg-[#f1f1f1]" />
          <button type="button" aria-label="Défiler vers le bas" className="flex h-[12px] w-[12px] items-center justify-center border border-[#999] bg-white"><svg aria-hidden="true" viewBox="0 0 6 4" className="h-1 w-[5px]"><path d="M0 0h6L3 4z" /></svg></button>
        </div>
      </div>
      <div className="flex h-[22px] border-b border-[#c6c6c6] text-[10px]">
        <div className="flex w-[80px] items-center justify-center gap-[18px] pr-3 text-[#bbb]">
          <svg aria-hidden="true" viewBox="0 0 4 6" className="h-[6px] w-1" fill="currentColor"><path d="M4 0v6L0 3z" /></svg>
          <svg aria-hidden="true" viewBox="0 0 4 6" className="h-[6px] w-1" fill="currentColor"><path d="M0 0v6l4-3z" /></svg>
        </div>
        <button type="button" className="h-[19px] w-[49px] border-x border-b-2 border-x-[#999] border-b-[#217346] bg-white font-bold text-[#217346]">Feuil1</button>
        <button type="button" aria-label="Nouvelle feuille" className="ml-[26px]"><Svg c="h-[14px] w-[14px]" vb="0 0 16 16"><circle cx="8" cy="8" r="7" stroke="#777" /><path d="M8 4v8M4 8h8" stroke="#666" strokeWidth="1.6" /></Svg></button>
        <span className="mt-1 ml-auto mr-[10px] text-[#999]">⋮</span>
        <div className="mt-[5px] mr-[16px] flex h-[12px] w-[584px]">
          <button type="button" aria-label="Défiler à gauche" className="flex w-[13px] items-center justify-center border border-[#999] bg-white"><svg aria-hidden="true" viewBox="0 0 4 6" className="h-[6px] w-1"><path d="M4 0v6L0 3z" /></svg></button>
          <span className="w-[522px] border border-[#999] bg-white" />
          <span className="flex-1 bg-[#f1f1f1]" />
          <button type="button" aria-label="Défiler à droite" className="flex w-[13px] items-center justify-center border border-[#999] bg-white"><svg aria-hidden="true" viewBox="0 0 4 6" className="h-[6px] w-1"><path d="M0 0v6l4-3z" /></svg></button>
        </div>
      </div>
      <footer className="flex h-[17px] items-center bg-[#f3f2f1] pl-[9px] text-[8px] text-[#444]">
        <span className="w-[32px]">Prêt</span>
        <Svg c="mr-[3px] h-[11px] w-[11px]" vb="0 0 16 16"><circle cx="7" cy="3" r="2" stroke="#555" /><path d="M2 5l5 2 5-2M7 7v3l-3 5M9 12l2 3 4-5" stroke="#555" strokeWidth="1.2" /></Svg>
        <span className="text-[9px] text-[#555]">Accessibilité : vérification terminée</span>
        <div className="ml-auto flex h-full items-center">
          <Svg c="mr-[2px] h-[11px] w-3" vb="0 0 16 16"><path d="M6 11H1V2h13v5M3 14h5" stroke="#555" strokeWidth="1.2" /><circle cx="11" cy="11" r="3" stroke="#555" strokeWidth="2" /></Svg>
          <span className="w-[108px] text-[9px]">Paramètres d'affichage</span>
          {["M1 1h14v14H1zM1 6h14M1 10.500h14M6 1v14M10.500 1v14", "M2 1h12v14H2zM5 4h6v8H5zM5 6.500h6M5 9h6", "M1 1h14v14H1zM1 9h10V1M6 1v8"].map((d, i) => (
            <button key={d} type="button" aria-label="Mode d'affichage" className={`flex h-full w-8 items-center justify-center ${i === 0 ? "bg-[#cfcdcb]" : ""}`}><Svg c="h-[11px] w-[11px]" vb="0 0 16 16"><path d={d} stroke="#444" strokeWidth="1.3" /></Svg></button>
          ))}
          <span className="ml-[5px] text-[10px]">−</span>
          <input type="range" aria-label="Zoom" defaultValue={50} className="mx-1 h-[9px] w-20 appearance-none bg-linear-to-b from-transparent from-45% via-[#444] via-45% to-transparent to-60% [&::-webkit-slider-thumb]:h-[9px] [&::-webkit-slider-thumb]:w-1 [&::-webkit-slider-thumb]:appearance-none [&::-webkit-slider-thumb]:bg-[#444]" />
          <span className="text-[10px]">+</span>
          <span className="mr-[14px] ml-[12px]">100%</span>
        </div>
      </footer>
    </section>
  );
}

function RightTaskbar() {
  return (
    <footer className="flex h-8 items-center bg-[#212121]">
      <button type="button" aria-label="Démarrer" className="flex w-[39px] justify-center"><WindowsLogo /></button>
      <button type="button" aria-label="Rechercher" className="flex w-[38px] justify-center"><Svg c="h-4 w-4" vb="0 0 16 16"><circle cx="10" cy="6" r="5" stroke="#fff" strokeWidth="1.5" /><path d="M6.500 9.500L1 15" stroke="#fff" strokeWidth="1.5" /></Svg></button>
      <button type="button" aria-label="Affichage des tâches" className="flex w-[39px] justify-center"><TaskView /></button>
      <TaskApps />
      <div className="mr-[4px] ml-auto"><Clock /></div>
    </footer>
  );
}

export default function App() {
  return (
    <main className="flex min-h-screen bg-black font-['Open_Sans','Noto_Sans',sans-serif]">
      <div className="flex w-1/2 flex-col pt-[185px]">
        <DynamoWindow />
        <LeftTaskbar />
      </div>
      <div className="relative flex w-1/2 flex-col overflow-hidden pb-[185px]">
        <RevitWindow />
        <ExcelWindow />
        <RightTaskbar />
      </div>
    </main>
  );
}
